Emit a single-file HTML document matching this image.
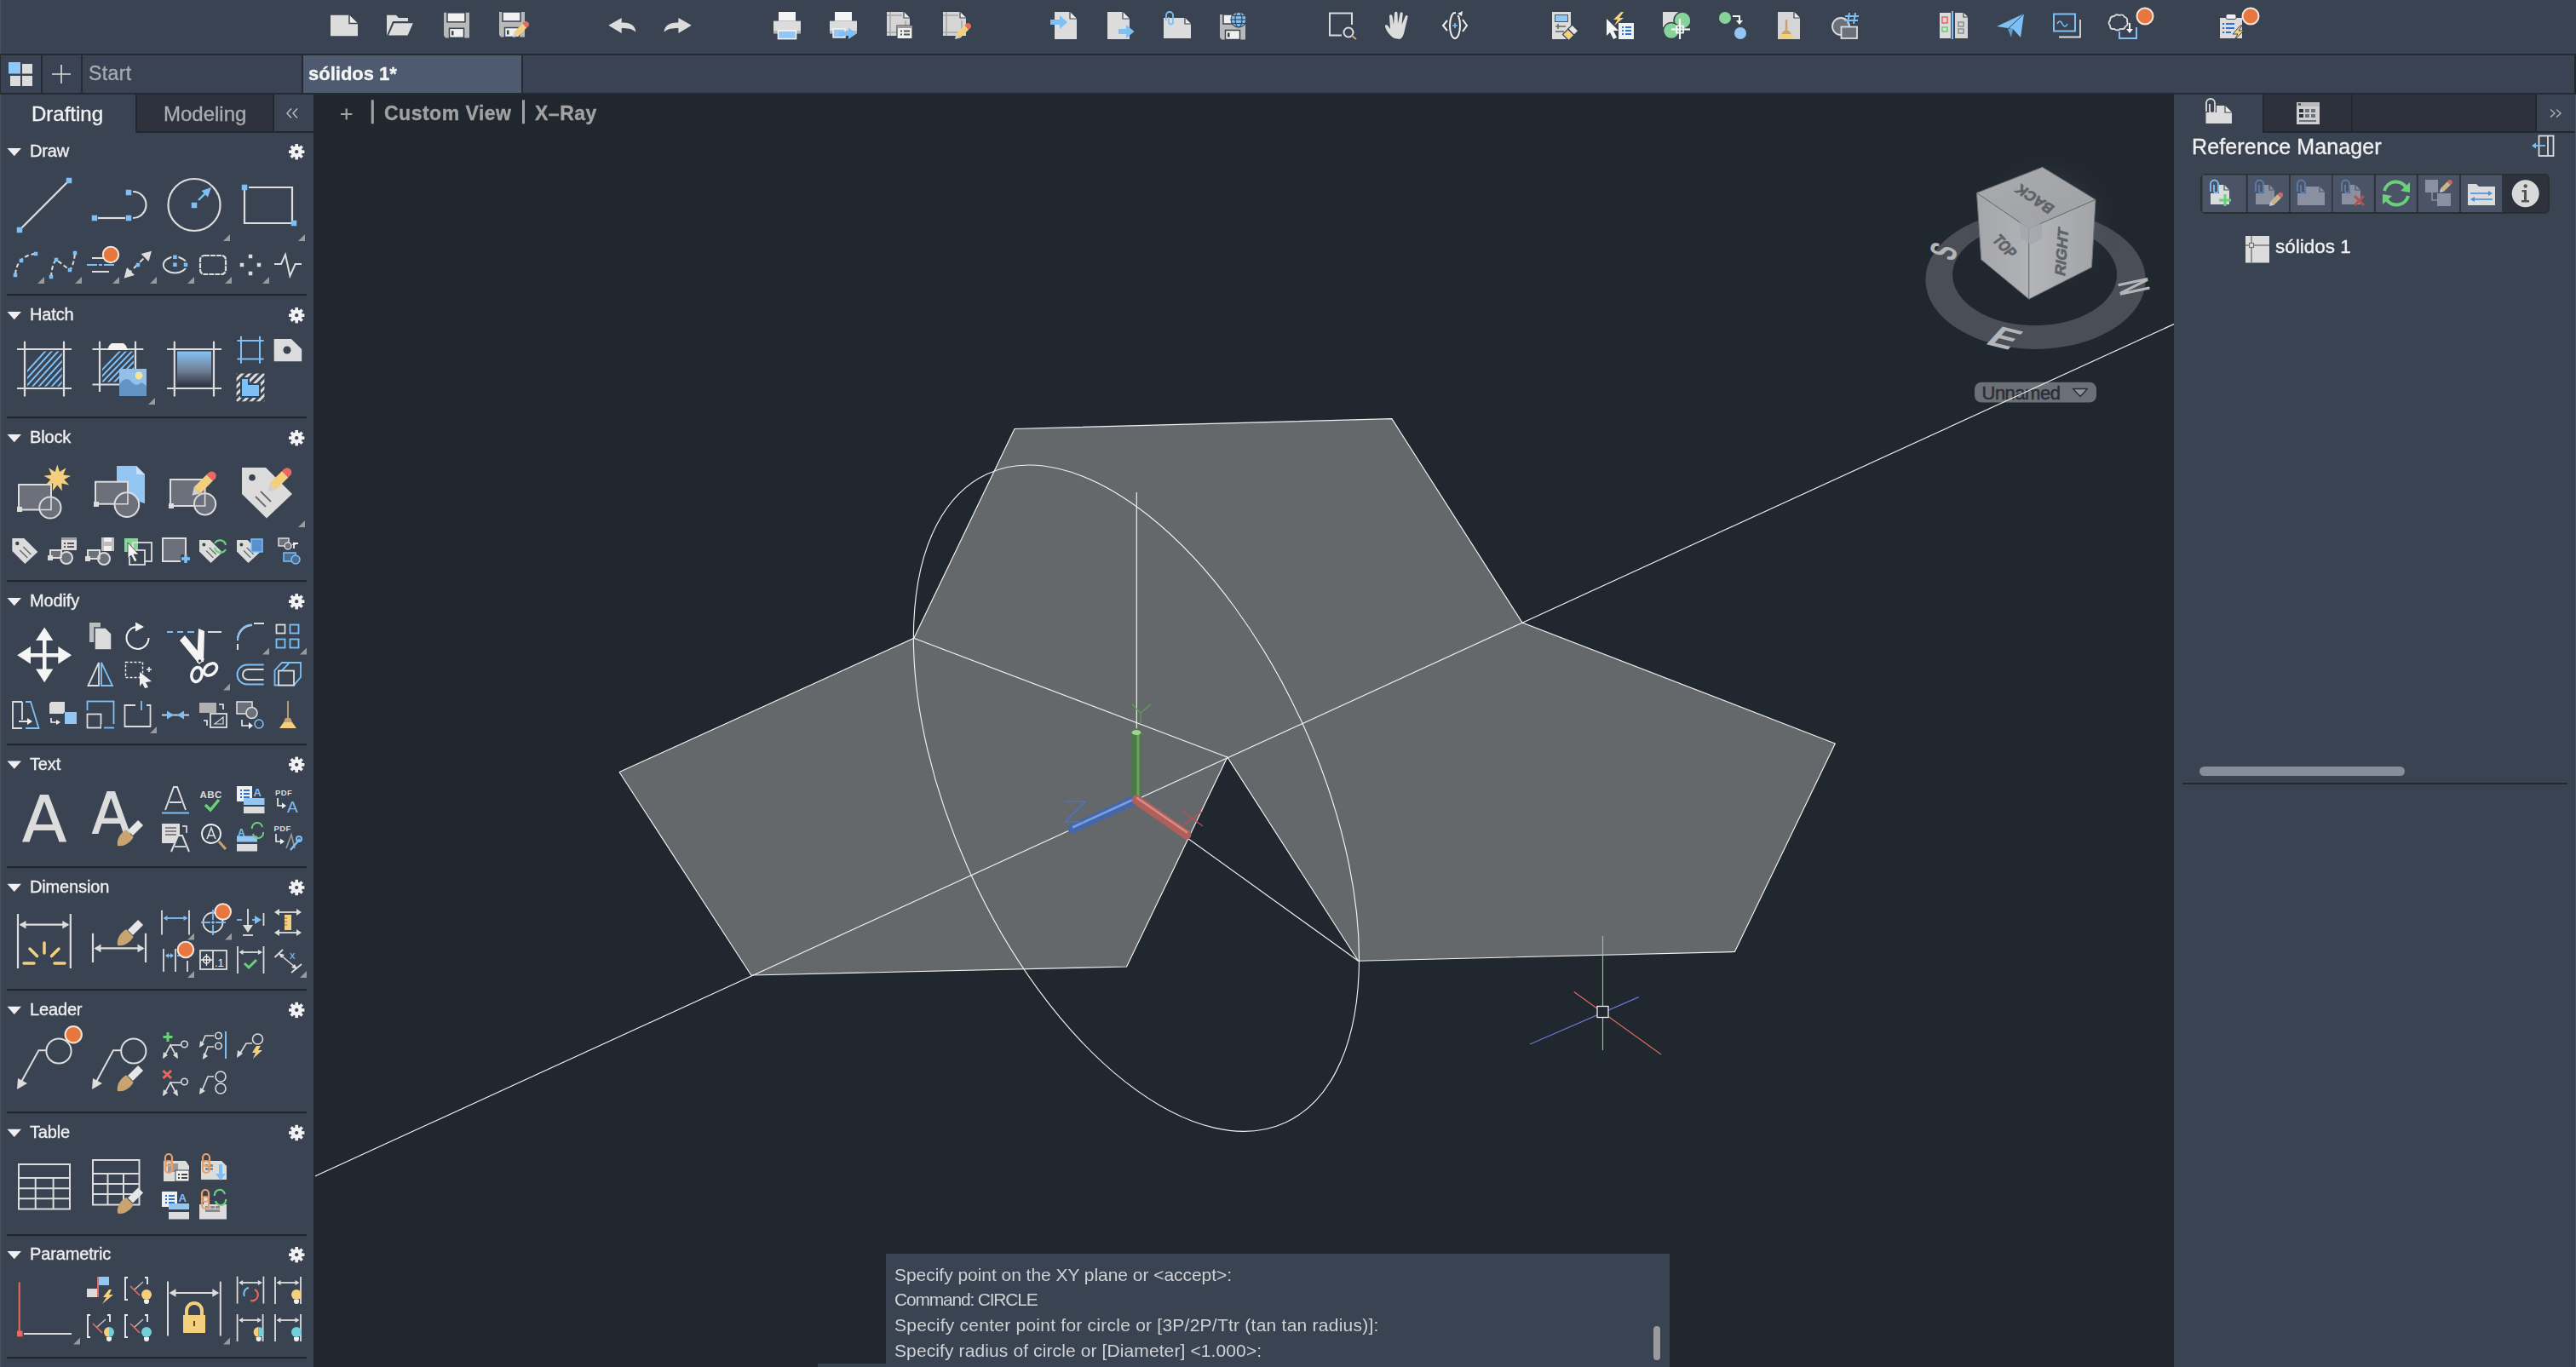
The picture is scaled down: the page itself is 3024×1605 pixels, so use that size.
<!DOCTYPE html>
<html><head><meta charset="utf-8">
<style>
*{margin:0;padding:0;box-sizing:border-box}
html,body{width:3024px;height:1605px;overflow:hidden;background:#21272e;font-family:"Liberation Sans",sans-serif}
.abs{position:absolute}
.t{position:absolute;white-space:nowrap;line-height:1;font-family:"Liberation Sans",sans-serif;will-change:transform;-webkit-text-stroke:0.35px currentColor}

</style></head><body>
<div class="abs" style="left:0;top:0;width:3024px;height:64px;background:#3a4352"></div>
<div class="abs" style="left:0;top:0;width:1px;height:1605px;background:#4a5160"></div>
<div class="abs" style="left:0;top:63px;width:3024px;height:48px;background:#262a32"></div>
<div class="abs" style="left:1px;top:65px;width:47px;height:44px;background:#3a4353"></div>
<div class="abs" style="left:50px;top:65px;width:45px;height:44px;background:#3a4353"></div>
<div class="abs" style="left:97px;top:65px;width:257px;height:44px;background:#3a4353"></div>
<div class="abs" style="left:356px;top:65px;width:256px;height:44px;background:#4e5a70"></div>
<div class="abs" style="left:614px;top:65px;width:2408px;height:44px;background:#3a4353"></div>
<div class="abs" style="left:3022px;top:63px;width:2px;height:48px;background:#22262d"></div>
<div class="abs" style="left:1px;top:111px;width:367px;height:1494px;background:#3a4352"></div>
<div class="abs" style="left:159px;top:111px;width:163px;height:45px;background:#2e323d;border-left:2px solid #23272e;border-right:2px solid #23272e;border-bottom:2px solid #23272e"></div>
<div class="abs" style="left:322px;top:111px;width:46px;height:45px;background:#3a4352;border-bottom:2px solid #23272e"></div>
<div class="abs" style="left:368px;top:111px;width:2px;height:1494px;background:#23282f"></div>
<div class="abs" style="left:2552px;top:111px;width:472px;height:1494px;background:#3a4352"></div>
<div class="abs" style="left:2656px;top:111px;width:320px;height:45px;background:#2d313c;border-left:2px solid #23272e;border-bottom:2px solid #23272e"></div>
<div class="abs" style="left:2760px;top:111px;width:2px;height:45px;background:#23272e"></div>
<div class="abs" style="left:2976px;top:111px;width:48px;height:45px;background:#3a4352;border-left:2px solid #23272e;border-bottom:2px solid #23272e"></div>
<div class="abs" style="left:2583px;top:204px;width:410px;height:47px;background:#2d323c;border:2px solid #27302e;border-radius:6px"></div>
<div class="abs" style="left:2582px;top:900px;width:241px;height:11px;background:#878e99;border-radius:6px"></div>
<div class="abs" style="left:2562px;top:919px;width:452px;height:2px;background:#22272e"></div>
<div class="abs" style="left:960px;top:1601px;width:1000px;height:4px;background:#3a4352"></div>
<div class="abs" style="left:1040px;top:1472px;width:920px;height:133px;background:#3a4352"></div>
<div class="abs" style="left:1941px;top:1557px;width:8px;height:40px;background:#9a9a9d;border-radius:4px"></div>
<div class="abs" style="left:3023px;top:111px;width:1px;height:1494px;background:#4f5665"></div>

<svg class="abs" style="left:0;top:0" width="3024" height="1605" viewBox="0 0 3024 1605">
<defs><clipPath id="vpc"><rect x="370" y="111" width="2182" height="1494"/></clipPath>
<radialGradient id="glow" cx="0.5" cy="0.5" r="0.5"><stop offset="0" stop-color="#8a9099" stop-opacity="0.35"/><stop offset="0.6" stop-color="#5a6068" stop-opacity="0.15"/><stop offset="1" stop-color="#20252d" stop-opacity="0"/></radialGradient>
<linearGradient id="topf" x1="0" y1="0" x2="1" y2="1"><stop offset="0" stop-color="#a9abae"/><stop offset="1" stop-color="#9fa1a5"/></linearGradient>
<linearGradient id="leftf" x1="0" y1="0" x2="1" y2="0"><stop offset="0" stop-color="#a4a6a9"/><stop offset="1" stop-color="#b0b2b5"/></linearGradient>
<linearGradient id="rightf" x1="0" y1="0" x2="1" y2="0"><stop offset="0" stop-color="#b3b5b8"/><stop offset="1" stop-color="#a2a4a7"/></linearGradient>
</defs>
<g clip-path="url(#vpc)">
<!-- viewcube -->
<path fill-rule="evenodd" fill="#4a4f57" d="M2260.3,328.5 a129.2,81.4 0 1,0 258.4,0 a129.2,81.4 0 1,0 -258.4,0 Z M2292.1,322.5 a96.5,59.7 0 1,0 193,0 a96.5,59.7 0 1,0 -193,0 Z"/>
<ellipse cx="2402" cy="262" rx="92" ry="88" fill="url(#glow)" opacity="0.9"/>
<polygon points="2320.5,226.5 2397.6,196.3 2460,234.4 2381.8,268.5" fill="url(#topf)" stroke="#6e7175" stroke-width="1"/>
<polygon points="2320.5,226.5 2381.8,268.5 2381.8,351.2 2325.7,304.7" fill="url(#leftf)" stroke="#6e7175" stroke-width="1"/>
<polygon points="2381.8,268.5 2460,234.4 2455.5,313.8 2381.8,351.2" fill="url(#rightf)" stroke="#6e7175" stroke-width="1"/>
<polygon points="2370,262 2384,256 2397,264 2397,280 2384,287 2372,280" fill="#a4a8ae" opacity="0.8"/>
<g fill="#5f6369" stroke="#5f6369" stroke-width="0.7" font-family="Liberation Sans" font-weight="bold">
<text x="0" y="0" font-size="17" transform="translate(2413,243) rotate(-146) skewX(-10)">BACK</text>
<text x="0" y="0" font-size="17" transform="translate(2338,282) rotate(55) skewY(-8) scale(0.85,1.1)">TOP</text>
<text x="0" y="0" font-size="18" transform="translate(2424,325) rotate(-86) skewX(-12) scale(1,0.95)">RIGHT</text>
</g>
<g fill="#b3b5b8" font-family="Liberation Sans" font-weight="bold">
<text x="0" y="0" font-size="36" transform="translate(2293,308) rotate(-68) scale(0.65,1.25)">S</text>
<text x="0" y="0" font-size="38" transform="translate(2524,341) rotate(-102) scale(0.62,1.35)">N</text>
<text x="0" y="0" font-size="40" transform="translate(2329,403.5) rotate(14) skewX(-28) scale(1.15,0.9)">E</text>
</g>
<rect x="2318" y="448.8" width="143" height="23.8" rx="8" fill="#6b7077"/>
<text x="2326.5" y="468.8" font-family="Liberation Sans" font-size="22" fill="#2a2e35" stroke="#2a2e35" stroke-width="0.5" letter-spacing="-0.5">Unnamed</text>
<polygon points="2433.5,456.5 2450.5,456.5 2442,465.5" fill="#8c979d" stroke="#2a2e35" stroke-width="1.4" stroke-linejoin="round"/>

<polygon fill="#65686b" points="727,906.5 1072.8,749.3 1191,503.5 1633.9,491.7 1787,731 2154.3,873 2036.4,1117.5 1594.5,1128.2 1440.8,889 1322.6,1135 881.8,1145"/>
<g stroke="#f2f2f2" stroke-width="1.15" fill="none">
<polyline points="727,906.5 1072.8,749.3 1191,503.5 1633.9,491.7 1787,731 2154.3,873 2036.4,1117.5 1594.5,1128.2 1440.8,889 1322.6,1135 881.8,1145 727,906.5"/>
<line x1="368" y1="1381.7" x2="2552" y2="380.5"/>
<line x1="1072.8" y1="749.3" x2="1440.8" y2="889"/>
<line x1="1331" y1="938.7" x2="1594.5" y2="1128.2"/>
<line x1="1334.3" y1="578" x2="1334.3" y2="858"/>
<ellipse cx="1333.94" cy="937.2" rx="213.87" ry="419.1" transform="rotate(-24.69 1333.94 937.2)"/>
</g>
<!-- UCS icon -->
<g stroke-linecap="round">
<line x1="1334" y1="861" x2="1334" y2="936" stroke="#4a7a44" stroke-width="11.5"/>
<line x1="1336" y1="862" x2="1336" y2="934" stroke="#6fa062" stroke-width="3"/>
<line x1="1332" y1="939" x2="1259" y2="973" stroke="#4466aa" stroke-width="11"/>
<line x1="1332" y1="938" x2="1260" y2="971" stroke="#7ca0dc" stroke-width="2.5"/>
<line x1="1334" y1="939" x2="1393" y2="980" stroke="#b0605c" stroke-width="11"/>
<line x1="1335" y1="937" x2="1393" y2="977" stroke="#d98b86" stroke-width="2.5"/>
</g>
<ellipse cx="1334" cy="860" rx="5.5" ry="3" fill="#9fd394"/>
<g stroke-width="1.1" fill="none">
<polyline points="1329,827 1339,837 1351,827" stroke="#59a64e"/><line x1="1339" y1="837" x2="1339" y2="850" stroke="#59a64e"/>
<polyline points="1250,941 1274,941 1250,965 1272,965" stroke="#4b79d0"/>
<line x1="1388" y1="952" x2="1412" y2="970" stroke="#c34f4a"/><line x1="1412" y1="952" x2="1388" y2="970" stroke="#c34f4a"/>
</g>
<!-- crosshair -->
<g stroke-width="1.2">
<line x1="1881.5" y1="1099" x2="1881.5" y2="1233" stroke="#7fd16f"/>
<line x1="1847.7" y1="1164.6" x2="1950" y2="1238" stroke="#d86b61"/>
<line x1="1796" y1="1226" x2="1923.8" y2="1170.6" stroke="#7474d8"/>
<rect x="1875" y="1181.5" width="13" height="13" fill="#21272e" stroke="#f0f0f0" stroke-width="1.3"/>
</g>
</g>

<path d="M388,17.7 L410,17.7 L420,27.5 L420,42.2 L388,42.2 Z" fill="#dcdcdc"/><path d="M410,17.7 L410,27.5 L420,27.5" fill="#ececec" stroke="#3a4352" stroke-width="1.5"/>
<path d="M454,17.7 L465,17.7 L468,21 L479,21 L479,25 L461,25 L454,42 Z" fill="#dcdcdc"/><polygon points="462,26.5 486,26.5 479,42.2 455,42.2" fill="#dcdcdc" stroke="#3a4352" stroke-width="1.5"/>
<g transform="translate(521,14.8)"><path d="M0,0 L30,0 L30,29.6 L2,29.6 L0,27 Z" fill="#b9b9b9"/><rect x="4" y="0" width="21" height="11" fill="#f0f0f0" stroke="#3a4352" stroke-width="1.5"/><rect x="6.5" y="18.5" width="17" height="11" fill="#f0f0f0" stroke="#3a4352" stroke-width="1.5"/><rect x="9" y="21.5" width="2.5" height="5" fill="#3a4352"/></g>
<g transform="translate(586,14)"><path d="M0,0 L30,0 L30,29.6 L2,29.6 L0,27 Z" fill="#b9b9b9"/><rect x="4" y="0" width="21" height="11" fill="#f0f0f0" stroke="#3a4352" stroke-width="1.5"/><rect x="6.5" y="18.5" width="17" height="11" fill="#f0f0f0" stroke="#3a4352" stroke-width="1.5"/><rect x="9" y="21.5" width="2.5" height="5" fill="#3a4352"/></g><g transform="translate(602,44) scale(0.7)"><g transform="rotate(-45)"><polygon points="0,0 8,-5 8,5" fill="#d0d0d0"/><rect x="8" y="-5" width="20" height="10" fill="#f4d07e"/><path d="M28,-5 h3 a5,5 0 0 1 0,10 h-3 z" fill="#ea6a62"/></g></g>
<path d="M714.3,29.8 L729.7,21 L729.7,26.5 C740,26 746,30 746.3,37.7 C742,33.5 736,33 729.7,33 L729.7,39 Z" fill="#dcdcdc"/>
<path d="M811.8,29.8 L796.4,21 L796.4,26.5 C786,26 780,30 779.5,37.7 C784,33.5 790,33 796.4,33 L796.4,39 Z" fill="#dcdcdc"/>
<rect x="914" y="14" width="20" height="10.6" fill="#f5f5f5"/><rect x="908" y="24.6" width="32" height="14.8" fill="#dcdcdc"/><rect x="908" y="36" width="32" height="3" fill="#b5b5b5"/><rect x="913.5" y="36" width="21" height="9.6" fill="#94c6f3" stroke="#f5f5f5" stroke-width="1.6"/>
<rect x="980" y="14" width="20" height="10.6" fill="#f5f5f5"/><rect x="974" y="24.6" width="32" height="14.8" fill="#dcdcdc"/><rect x="974" y="36" width="32" height="3" fill="#b5b5b5"/><rect x="978" y="34" width="14" height="10" fill="#94c6f3" stroke="#f5f5f5" stroke-width="1.4"/><rect x="985" y="37" width="12" height="5" fill="#7ec0f5"/><polygon points="996,32.5 1005.7,39.5 996,46" fill="#7ec0f5"/>
<path d="M1041,14 L1061,14 L1068,21 L1068,42 L1041,42 Z" fill="#d5d5d5"/><path d="M1061,14 L1061,21 L1068,21" fill="#ededed" stroke="#3a4352" stroke-width="1.2"/><g stroke="#a8a8a8" stroke-width="1.6"><line x1="1045" y1="14" x2="1045" y2="42"/><line x1="1041" y1="38" x2="1068" y2="38"/><line x1="1063" y1="24" x2="1063" y2="42"/><line x1="1041" y1="18" x2="1059" y2="18"/></g><rect x="1053" y="30" width="18" height="15.6" fill="#f0f0f0" stroke="#3a4352" stroke-width="1.2"/><rect x="1053" y="30" width="18" height="3" fill="#9a9a9a"/><g fill="#555"><rect x="1057" y="35.5" width="2" height="2"/><rect x="1061" y="35.5" width="7" height="2"/><rect x="1057" y="39.5" width="2" height="2"/><rect x="1061" y="39.5" width="7" height="2"/></g>
<path d="M1107,14 L1127,14 L1134,21 L1134,42 L1107,42 Z" fill="#d5d5d5"/><path d="M1127,14 L1127,21 L1134,21" fill="#ededed" stroke="#3a4352" stroke-width="1.2"/><g stroke="#a8a8a8" stroke-width="1.6"><line x1="1111" y1="14" x2="1111" y2="42"/><line x1="1107" y1="38" x2="1134" y2="38"/><line x1="1129" y1="24" x2="1129" y2="42"/><line x1="1107" y1="18" x2="1125" y2="18"/></g><g transform="translate(1121,46) scale(0.7)"><g transform="rotate(-45)"><polygon points="0,0 8,-5 8,5" fill="#d0d0d0"/><rect x="8" y="-5" width="20" height="10" fill="#f4d07e"/><path d="M28,-5 h3 a5,5 0 0 1 0,10 h-3 z" fill="#ea6a62"/></g></g>
<path d="M1238,14 L1256,14 L1264,22 L1264,46 L1238,46 Z" fill="#dcdcdc"/><path d="M1256,14 L1256,22 L1264,22" fill="#ededed" stroke="#3a4352" stroke-width="1.2"/><rect x="1233" y="23" width="13" height="6" fill="#7ec0f5"/><polygon points="1244,18 1253,26 1244,34" fill="#7ec0f5" stroke="#3a4352" stroke-width="0"/>
<path d="M1300,14 L1318,14 L1326,22 L1326,46 L1300,46 Z" fill="#dcdcdc"/><path d="M1318,14 L1318,22 L1326,22" fill="#ededed" stroke="#3a4352" stroke-width="1.2"/><rect x="1313" y="34" width="10" height="6" fill="#7ec0f5" stroke="#3a4352" stroke-width="0"/><polygon points="1322,29 1331.5,37 1322,45" fill="#7ec0f5"/>
<path d="M1366,21 L1391,21 L1398,28 L1398,45 L1366,45 Z" fill="#dcdcdc"/><path d="M1391,21 L1391,28 L1398,28" fill="#ededed" stroke="#3a4352" stroke-width="1.2"/><path d="M1369,24 v-6 a4,4 0 0 1 8,0 v8 a2.5,2.5 0 0 1 -5,0 v-6" fill="none" stroke="#7ec0f5" stroke-width="1.8"/>
<g transform="translate(1432,17)"><path d="M0,0 L30,0 L30,29.6 L2,29.6 L0,27 Z" fill="#b9b9b9"/><rect x="4" y="0" width="21" height="11" fill="#f0f0f0" stroke="#3a4352" stroke-width="1.5"/><rect x="6.5" y="18.5" width="17" height="11" fill="#f0f0f0" stroke="#3a4352" stroke-width="1.5"/><rect x="9" y="21.5" width="2.5" height="5" fill="#3a4352"/></g><circle cx="1454" cy="23" r="9" fill="#7ec0f5" stroke="#3a4352" stroke-width="1.2"/><g stroke="#3a4352" stroke-width="1.2" fill="none"><ellipse cx="1454" cy="23" rx="4" ry="9"/><line x1="1445" y1="23" x2="1463" y2="23"/><line x1="1447" y1="18.5" x2="1461" y2="18.5"/><line x1="1447" y1="27.5" x2="1461" y2="27.5"/></g>
<rect x="1561" y="15.5" width="26" height="26" fill="none" stroke="#dcdcdc" stroke-width="2"/><rect x="1575" y="29" width="20" height="20" fill="#3a4352"/><circle cx="1583" cy="38" r="5.5" fill="none" stroke="#dcdcdc" stroke-width="2"/><line x1="1587" y1="42" x2="1592" y2="46" stroke="#c9a36f" stroke-width="2.2"/>
<path d="M1637,45 C1631,42 1627,35 1626,31 C1625.5,29 1628,28.5 1629.5,30.5 L1632,34 L1631,19 C1631,16.5 1634,16.5 1634.5,19 L1636,29 L1637,15.5 C1637.5,13 1640.5,13 1640.5,15.5 L1641,28 L1643.5,16 C1644,13.5 1647,14 1646.7,16.5 L1645.5,29 L1649.5,19.5 C1650.5,17 1653.5,18 1652.5,20.5 L1649,35 C1648,41 1646,45 1643,46 Z" fill="#dcdcdc"/>
<ellipse cx="1708" cy="30" rx="6" ry="15" fill="none" stroke="#f0f0f0" stroke-width="2"/><path d="M1699,24 L1694,30 L1699,36" fill="none" stroke="#f0f0f0" stroke-width="2"/><path d="M1717,23 L1722,30 L1717,37" fill="none" stroke="#f0f0f0" stroke-width="2"/><path d="M1705,30 h6 M1708,27 v6" stroke="#7ec0f5" stroke-width="1.6"/><rect x="1709" y="12" width="8" height="6" fill="#3a4352"/><polygon points="1711,16 1717,13 1716,19" fill="#f0f0f0"/>
<rect x="1822" y="14" width="22" height="32" fill="#dcdcdc"/><rect x="1825.5" y="17.5" width="15" height="8" fill="#94c6f3" stroke="#555" stroke-width="1"/><g stroke="#6a6a6a" stroke-width="1.6"><line x1="1826" y1="31" x2="1838" y2="31"/><line x1="1826" y1="37" x2="1836" y2="37"/><line x1="1829" y1="28" x2="1829" y2="34"/></g><g transform="translate(1838,44) rotate(-45)"><rect x="0" y="-5" width="9" height="10" fill="#f4d07e" stroke="#3a4352" stroke-width="1.2"/><rect x="9" y="-5" width="7" height="10" fill="#e6e6e6" stroke="#3a4352" stroke-width="1.2"/></g>
<polygon points="1886,22 1886,42 1890,38 1894,46 1898,44 1894,36 1900,36" fill="#f5f5f5"/><rect x="1900" y="27" width="18" height="19" fill="#f0f0f0"/><g fill="#2f6fd6"><rect x="1904" y="31" width="2" height="2"/><rect x="1908" y="31" width="7" height="2"/><rect x="1904" y="35" width="2" height="2"/><rect x="1908" y="35" width="7" height="2"/><rect x="1904" y="39" width="2" height="2"/><rect x="1908" y="39" width="7" height="2"/></g><polygon points="1903,14 1894,23 1899,23 1895,30 1906,21 1901,21 1906,14" fill="#f4d07e"/>
<rect x="1952" y="14" width="18" height="18" fill="#dcdcdc"/><circle cx="1975" cy="24" r="10" fill="#86d49a" stroke="#3a4352" stroke-width="1.5"/><circle cx="1962" cy="36" r="9.5" fill="#86d49a" stroke="#3a4352" stroke-width="1.5"/><rect x="1963" y="25" width="18" height="18" fill="#3a4352" opacity="0"/><g stroke="#f5f5f5" stroke-width="2.2"><line x1="1972" y1="22" x2="1972" y2="46"/><line x1="1962" y1="34.5" x2="1984" y2="34.5"/></g><rect x="1968" y="30.5" width="8" height="8" fill="none" stroke="#f5f5f5" stroke-width="1.8"/>
<circle cx="2025" cy="21" r="7" fill="#86d49a"/><circle cx="2043" cy="39" r="7" fill="#94c6f3"/><path d="M2034,19 h8 v6" fill="none" stroke="#f5f5f5" stroke-width="2"/><polygon points="2038,24 2046,24 2042,29" fill="#f5f5f5"/>
<path d="M2087,14 L2106,14 L2113,21 L2113,46 L2087,46 Z" fill="#d5d5d5"/><path d="M2106,14 L2106,21 L2113,21" fill="#ededed" stroke="#3a4352" stroke-width="1.2"/><line x1="2097" y1="23" x2="2097" y2="36" stroke="#c9a36f" stroke-width="2.5"/><polygon points="2094,36 2100,36 2103,40 2091,40" fill="#c9a36f"/><polygon points="2091,40 2103,40 2106,46 2088,46" fill="#f4d07e"/>
<circle cx="2161" cy="31" r="10" fill="#6b707a" stroke="#dcdcdc" stroke-width="1.8"/><rect x="2161.5" y="31.5" width="18.5" height="13.5" fill="#6b707a" stroke="#dcdcdc" stroke-width="1.8"/><g stroke="#7ec0f5" stroke-width="2"><line x1="2171" y1="15" x2="2169" y2="28"/><line x1="2178" y1="15" x2="2176" y2="28"/><line x1="2166" y1="19" x2="2182" y2="19"/><line x1="2165" y1="24" x2="2181" y2="24"/></g>
<rect x="2277" y="15" width="13" height="30" fill="#dcdcdc"/><rect x="2280" y="20" width="6" height="7" fill="none" stroke="#ea6a62" stroke-width="1.6"/><rect x="2280" y="32" width="6" height="5" fill="none" stroke="#6ccf7c" stroke-width="1.6"/><line x1="2292" y1="13" x2="2292" y2="46" stroke="#7ec0f5" stroke-width="2"/><path d="M2295,15 L2305,15 L2310,20 L2310,45 L2295,45 Z" fill="#d5d5d5"/><path d="M2305,15 L2305,20 L2310,20" fill="#ededed" stroke="#3a4352" stroke-width="1.2"/><rect x="2299" y="26" width="6" height="5" fill="none" stroke="#888" stroke-width="1.4"/><rect x="2299" y="34" width="6" height="5" fill="none" stroke="#888" stroke-width="1.4"/>
<polygon points="2344,31 2376,16 2372,44 2363,34" fill="#7ec0f5"/><polygon points="2357,34 2363,34 2361,44" fill="#5c9fd6"/><line x1="2357" y1="34" x2="2376" y2="16" stroke="#3a4352" stroke-width="1"/>
<rect x="2411" y="16.5" width="25" height="20" fill="none" stroke="#7ec0f5" stroke-width="2"/><path d="M2415,28 q3,-6 6,0 q3,6 6,0" fill="none" stroke="#7ec0f5" stroke-width="1.6"/><polyline points="2417,43.5 2442,43.5 2442,23" fill="none" stroke="#dcdcdc" stroke-width="1.8"/>
<path d="M2477,24 q0,-5 5,-5 q2,-3 6,-1 q4,-2 6,2 q4,1 3,5 q2,4 -2,6 q-1,4 -6,3 q-3,3 -7,0 q-5,1 -5,-4 q-3,-3 0,-6 z" fill="none" stroke="#dcdcdc" stroke-width="1.8"/><polyline points="2488,37 2488,45 2508,45 2508,32" fill="none" stroke="#7ec0f5" stroke-width="2"/><path d="M2500,27 v10" stroke="#f0f0f0" stroke-width="2"/><polygon points="2496,34 2504,34 2500,39" fill="#f0f0f0"/><circle cx="2518" cy="19" r="9.5" fill="#e5773f" stroke="#f5e6dc" stroke-width="2"/>
<rect x="2606" y="21" width="26" height="24" fill="#dcdcdc"/><rect x="2613" y="16.5" width="12" height="6" rx="2" fill="#f0f0f0" stroke="#3a4352" stroke-width="1"/><g fill="#2f6fd6"><rect x="2609" y="27" width="2.2" height="2"/><rect x="2613" y="27" width="10" height="2"/><rect x="2609" y="32" width="2.2" height="2"/><rect x="2613" y="32" width="10" height="2"/><rect x="2609" y="37" width="2.2" height="2"/><rect x="2613" y="37" width="6" height="2"/></g><polygon points="2630,30 2621,40 2627,40 2622,48 2634,36 2628,36 2632,30" fill="#f4d07e" stroke="#3a4352" stroke-width="1"/><circle cx="2642" cy="19" r="9.5" fill="#e5773f" stroke="#f5e6dc" stroke-width="2"/>
<rect x="10" y="73" width="14" height="13.5" fill="#8ec8f6"/><rect x="26" y="75" width="12" height="11.5" fill="#dcdcdc"/><rect x="12" y="89" width="12" height="12" fill="#dcdcdc"/><rect x="26" y="89" width="12" height="12" fill="#dcdcdc"/>
<path d="M72,76 v22 M61,87 h22" stroke="#dcdcdc" stroke-width="1.6"/>
<path d="M406.7,127.4 v13.2 M400,134 h13.4" stroke="#a2a2a2" stroke-width="2.2"/><rect x="435.8" y="117.3" width="3" height="28" fill="#a2a2a2"/><rect x="613" y="117.3" width="3" height="28" fill="#a2a2a2"/><polygon points="8.5,174 25.0,174 16.75,183.2" fill="#f0f0f0"/>
<g transform="translate(348.2,178.2)"><rect x="-1.8" y="-9.2" width="3.6" height="5" transform="rotate(0)" fill="#f2f2f2"/><rect x="-1.8" y="-9.2" width="3.6" height="5" transform="rotate(45)" fill="#f2f2f2"/><rect x="-1.8" y="-9.2" width="3.6" height="5" transform="rotate(90)" fill="#f2f2f2"/><rect x="-1.8" y="-9.2" width="3.6" height="5" transform="rotate(135)" fill="#f2f2f2"/><rect x="-1.8" y="-9.2" width="3.6" height="5" transform="rotate(180)" fill="#f2f2f2"/><rect x="-1.8" y="-9.2" width="3.6" height="5" transform="rotate(225)" fill="#f2f2f2"/><rect x="-1.8" y="-9.2" width="3.6" height="5" transform="rotate(270)" fill="#f2f2f2"/><rect x="-1.8" y="-9.2" width="3.6" height="5" transform="rotate(315)" fill="#f2f2f2"/><circle r="6.6" fill="#f2f2f2"/><circle r="2.1" fill="#3a4352"/></g>
<polygon points="8.5,366 25.0,366 16.75,375.2" fill="#f0f0f0"/>
<g transform="translate(348.2,370.2)"><rect x="-1.8" y="-9.2" width="3.6" height="5" transform="rotate(0)" fill="#f2f2f2"/><rect x="-1.8" y="-9.2" width="3.6" height="5" transform="rotate(45)" fill="#f2f2f2"/><rect x="-1.8" y="-9.2" width="3.6" height="5" transform="rotate(90)" fill="#f2f2f2"/><rect x="-1.8" y="-9.2" width="3.6" height="5" transform="rotate(135)" fill="#f2f2f2"/><rect x="-1.8" y="-9.2" width="3.6" height="5" transform="rotate(180)" fill="#f2f2f2"/><rect x="-1.8" y="-9.2" width="3.6" height="5" transform="rotate(225)" fill="#f2f2f2"/><rect x="-1.8" y="-9.2" width="3.6" height="5" transform="rotate(270)" fill="#f2f2f2"/><rect x="-1.8" y="-9.2" width="3.6" height="5" transform="rotate(315)" fill="#f2f2f2"/><circle r="6.6" fill="#f2f2f2"/><circle r="2.1" fill="#3a4352"/></g>
<polygon points="8.5,510 25.0,510 16.75,519.2" fill="#f0f0f0"/>
<g transform="translate(348.2,514.2)"><rect x="-1.8" y="-9.2" width="3.6" height="5" transform="rotate(0)" fill="#f2f2f2"/><rect x="-1.8" y="-9.2" width="3.6" height="5" transform="rotate(45)" fill="#f2f2f2"/><rect x="-1.8" y="-9.2" width="3.6" height="5" transform="rotate(90)" fill="#f2f2f2"/><rect x="-1.8" y="-9.2" width="3.6" height="5" transform="rotate(135)" fill="#f2f2f2"/><rect x="-1.8" y="-9.2" width="3.6" height="5" transform="rotate(180)" fill="#f2f2f2"/><rect x="-1.8" y="-9.2" width="3.6" height="5" transform="rotate(225)" fill="#f2f2f2"/><rect x="-1.8" y="-9.2" width="3.6" height="5" transform="rotate(270)" fill="#f2f2f2"/><rect x="-1.8" y="-9.2" width="3.6" height="5" transform="rotate(315)" fill="#f2f2f2"/><circle r="6.6" fill="#f2f2f2"/><circle r="2.1" fill="#3a4352"/></g>
<polygon points="8.5,702 25.0,702 16.75,711.2" fill="#f0f0f0"/>
<g transform="translate(348.2,706.2)"><rect x="-1.8" y="-9.2" width="3.6" height="5" transform="rotate(0)" fill="#f2f2f2"/><rect x="-1.8" y="-9.2" width="3.6" height="5" transform="rotate(45)" fill="#f2f2f2"/><rect x="-1.8" y="-9.2" width="3.6" height="5" transform="rotate(90)" fill="#f2f2f2"/><rect x="-1.8" y="-9.2" width="3.6" height="5" transform="rotate(135)" fill="#f2f2f2"/><rect x="-1.8" y="-9.2" width="3.6" height="5" transform="rotate(180)" fill="#f2f2f2"/><rect x="-1.8" y="-9.2" width="3.6" height="5" transform="rotate(225)" fill="#f2f2f2"/><rect x="-1.8" y="-9.2" width="3.6" height="5" transform="rotate(270)" fill="#f2f2f2"/><rect x="-1.8" y="-9.2" width="3.6" height="5" transform="rotate(315)" fill="#f2f2f2"/><circle r="6.6" fill="#f2f2f2"/><circle r="2.1" fill="#3a4352"/></g>
<polygon points="8.5,893.6 25.0,893.6 16.75,902.8000000000001" fill="#f0f0f0"/>
<g transform="translate(348.2,897.8000000000001)"><rect x="-1.8" y="-9.2" width="3.6" height="5" transform="rotate(0)" fill="#f2f2f2"/><rect x="-1.8" y="-9.2" width="3.6" height="5" transform="rotate(45)" fill="#f2f2f2"/><rect x="-1.8" y="-9.2" width="3.6" height="5" transform="rotate(90)" fill="#f2f2f2"/><rect x="-1.8" y="-9.2" width="3.6" height="5" transform="rotate(135)" fill="#f2f2f2"/><rect x="-1.8" y="-9.2" width="3.6" height="5" transform="rotate(180)" fill="#f2f2f2"/><rect x="-1.8" y="-9.2" width="3.6" height="5" transform="rotate(225)" fill="#f2f2f2"/><rect x="-1.8" y="-9.2" width="3.6" height="5" transform="rotate(270)" fill="#f2f2f2"/><rect x="-1.8" y="-9.2" width="3.6" height="5" transform="rotate(315)" fill="#f2f2f2"/><circle r="6.6" fill="#f2f2f2"/><circle r="2.1" fill="#3a4352"/></g>
<polygon points="8.5,1037.8 25.0,1037.8 16.75,1047.0" fill="#f0f0f0"/>
<g transform="translate(348.2,1042.0)"><rect x="-1.8" y="-9.2" width="3.6" height="5" transform="rotate(0)" fill="#f2f2f2"/><rect x="-1.8" y="-9.2" width="3.6" height="5" transform="rotate(45)" fill="#f2f2f2"/><rect x="-1.8" y="-9.2" width="3.6" height="5" transform="rotate(90)" fill="#f2f2f2"/><rect x="-1.8" y="-9.2" width="3.6" height="5" transform="rotate(135)" fill="#f2f2f2"/><rect x="-1.8" y="-9.2" width="3.6" height="5" transform="rotate(180)" fill="#f2f2f2"/><rect x="-1.8" y="-9.2" width="3.6" height="5" transform="rotate(225)" fill="#f2f2f2"/><rect x="-1.8" y="-9.2" width="3.6" height="5" transform="rotate(270)" fill="#f2f2f2"/><rect x="-1.8" y="-9.2" width="3.6" height="5" transform="rotate(315)" fill="#f2f2f2"/><circle r="6.6" fill="#f2f2f2"/><circle r="2.1" fill="#3a4352"/></g>
<polygon points="8.5,1181.7 25.0,1181.7 16.75,1190.9" fill="#f0f0f0"/>
<g transform="translate(348.2,1185.9)"><rect x="-1.8" y="-9.2" width="3.6" height="5" transform="rotate(0)" fill="#f2f2f2"/><rect x="-1.8" y="-9.2" width="3.6" height="5" transform="rotate(45)" fill="#f2f2f2"/><rect x="-1.8" y="-9.2" width="3.6" height="5" transform="rotate(90)" fill="#f2f2f2"/><rect x="-1.8" y="-9.2" width="3.6" height="5" transform="rotate(135)" fill="#f2f2f2"/><rect x="-1.8" y="-9.2" width="3.6" height="5" transform="rotate(180)" fill="#f2f2f2"/><rect x="-1.8" y="-9.2" width="3.6" height="5" transform="rotate(225)" fill="#f2f2f2"/><rect x="-1.8" y="-9.2" width="3.6" height="5" transform="rotate(270)" fill="#f2f2f2"/><rect x="-1.8" y="-9.2" width="3.6" height="5" transform="rotate(315)" fill="#f2f2f2"/><circle r="6.6" fill="#f2f2f2"/><circle r="2.1" fill="#3a4352"/></g>
<polygon points="8.5,1325.8 25.0,1325.8 16.75,1335.0" fill="#f0f0f0"/>
<g transform="translate(348.2,1330.0)"><rect x="-1.8" y="-9.2" width="3.6" height="5" transform="rotate(0)" fill="#f2f2f2"/><rect x="-1.8" y="-9.2" width="3.6" height="5" transform="rotate(45)" fill="#f2f2f2"/><rect x="-1.8" y="-9.2" width="3.6" height="5" transform="rotate(90)" fill="#f2f2f2"/><rect x="-1.8" y="-9.2" width="3.6" height="5" transform="rotate(135)" fill="#f2f2f2"/><rect x="-1.8" y="-9.2" width="3.6" height="5" transform="rotate(180)" fill="#f2f2f2"/><rect x="-1.8" y="-9.2" width="3.6" height="5" transform="rotate(225)" fill="#f2f2f2"/><rect x="-1.8" y="-9.2" width="3.6" height="5" transform="rotate(270)" fill="#f2f2f2"/><rect x="-1.8" y="-9.2" width="3.6" height="5" transform="rotate(315)" fill="#f2f2f2"/><circle r="6.6" fill="#f2f2f2"/><circle r="2.1" fill="#3a4352"/></g>
<polygon points="8.5,1469 25.0,1469 16.75,1478.2" fill="#f0f0f0"/>
<g transform="translate(348.2,1473.2)"><rect x="-1.8" y="-9.2" width="3.6" height="5" transform="rotate(0)" fill="#f2f2f2"/><rect x="-1.8" y="-9.2" width="3.6" height="5" transform="rotate(45)" fill="#f2f2f2"/><rect x="-1.8" y="-9.2" width="3.6" height="5" transform="rotate(90)" fill="#f2f2f2"/><rect x="-1.8" y="-9.2" width="3.6" height="5" transform="rotate(135)" fill="#f2f2f2"/><rect x="-1.8" y="-9.2" width="3.6" height="5" transform="rotate(180)" fill="#f2f2f2"/><rect x="-1.8" y="-9.2" width="3.6" height="5" transform="rotate(225)" fill="#f2f2f2"/><rect x="-1.8" y="-9.2" width="3.6" height="5" transform="rotate(270)" fill="#f2f2f2"/><rect x="-1.8" y="-9.2" width="3.6" height="5" transform="rotate(315)" fill="#f2f2f2"/><circle r="6.6" fill="#f2f2f2"/><circle r="2.1" fill="#3a4352"/></g>
<rect x="8" y="345" width="352" height="2.2" fill="#22262d"/>
<rect x="8" y="489" width="352" height="2.2" fill="#22262d"/>
<rect x="8" y="681" width="352" height="2.2" fill="#22262d"/>
<rect x="8" y="873" width="352" height="2.2" fill="#22262d"/>
<rect x="8" y="1017" width="352" height="2.2" fill="#22262d"/>
<rect x="8" y="1161" width="352" height="2.2" fill="#22262d"/>
<rect x="8" y="1305" width="352" height="2.2" fill="#22262d"/>
<rect x="8" y="1449" width="352" height="2.2" fill="#22262d"/>
<rect x="8" y="1593" width="352" height="2.2" fill="#22262d"/>
<polyline points="342,127.5 337,133 342,138.5" fill="none" stroke="#b5b8bd" stroke-width="1.5"/><polyline points="349,127.5 344,133 349,138.5" fill="none" stroke="#b5b8bd" stroke-width="1.5"/>
<line x1="23" y1="270" x2="80" y2="213" stroke="#dcdcdc" stroke-width="2.2"/><rect x="19.75" y="266.75" width="6.5" height="6.5" fill="#7ec0f5"/><rect x="77.75" y="208.75" width="6.5" height="6.5" fill="#7ec0f5"/>
<line x1="115" y1="256" x2="147" y2="256" stroke="#dcdcdc" stroke-width="2.2"/><path d="M156,225 A15.5,15.5 0 0 1 156,256" fill="none" stroke="#dcdcdc" stroke-width="2.2"/><rect x="107.75" y="252.75" width="6.5" height="6.5" fill="#7ec0f5"/><rect x="147.75" y="252.75" width="6.5" height="6.5" fill="#7ec0f5"/><rect x="147.75" y="222.75" width="6.5" height="6.5" fill="#7ec0f5"/>
<circle cx="228" cy="240.5" r="30.5" fill="none" stroke="#dcdcdc" stroke-width="2.2"/><line x1="233" y1="235" x2="243" y2="225" stroke="#7ec0f5" stroke-width="2.4"/><polygon points="248,220 236.5,224 244,231.5" fill="#7ec0f5"/><rect x="224.75" y="237.75" width="6.5" height="6.5" fill="#7ec0f5"/>
<polyline points="287,223 287,262 343,262 343,220 292,220" fill="none" stroke="#dcdcdc" stroke-width="2.2"/><rect x="283.75" y="216.75" width="6.5" height="6.5" fill="#7ec0f5"/><rect x="341.75" y="258.75" width="6.5" height="6.5" fill="#7ec0f5"/>
<polygon points="270,283 262,283 270,275" fill="#9a9a9a"/><polygon points="358,283 350,283 358,275" fill="#9a9a9a"/>
<path d="M18,322 Q20,300 42,298" fill="none" stroke="#dcdcdc" stroke-width="2" stroke-dasharray="5,3"/><rect x="15.75" y="320.75" width="4.5" height="4.5" fill="#7ec0f5"/><rect x="22.75" y="303.75" width="4.5" height="4.5" fill="#7ec0f5"/><rect x="39.75" y="295.75" width="4.5" height="4.5" fill="#7ec0f5"/>
<path d="M60,325 Q61,310 66,305 L82,317 Q87,310 88,297" fill="none" stroke="#dcdcdc" stroke-width="2" stroke-dasharray="5,3"/><rect x="57.75" y="322.75" width="4.5" height="4.5" fill="#7ec0f5"/><rect x="63.75" y="302.75" width="4.5" height="4.5" fill="#7ec0f5"/><rect x="79.75" y="314.75" width="4.5" height="4.5" fill="#7ec0f5"/><rect x="85.75" y="294.75" width="4.5" height="4.5" fill="#7ec0f5"/>
<line x1="108" y1="303" x2="121" y2="303" stroke="#dcdcdc" stroke-width="2"/><line x1="102" y1="311" x2="114" y2="311" stroke="#7ec0f5" stroke-width="2"/><line x1="116" y1="311" x2="120" y2="311" stroke="#7ec0f5" stroke-width="2"/><line x1="122" y1="311" x2="134" y2="311" stroke="#7ec0f5" stroke-width="2"/><line x1="108" y1="319" x2="128" y2="319" stroke="#dcdcdc" stroke-width="2"/><circle cx="130" cy="299" r="9.2" fill="#e5773f" stroke="#f5e6dc" stroke-width="2"/>
<line x1="150" y1="322" x2="174" y2="298" stroke="#dcdcdc" stroke-width="2" stroke-dasharray="6,4"/><polygon points="145.6,326.8 149,314 158,323" fill="#dcdcdc"/><polygon points="178,294.7 174.5,307 165.5,298" fill="#dcdcdc"/><rect x="159.75" y="308.75" width="4.5" height="4.5" fill="#7ec0f5"/>
<ellipse cx="205.4" cy="311" rx="13.6" ry="9.4" fill="none" stroke="#dcdcdc" stroke-width="2"/><rect x="201.4" y="297.8" width="8" height="8" fill="#3a4352"/><rect x="214" y="306.8" width="8" height="8" fill="#3a4352"/><rect x="203.15" y="308.55" width="4.5" height="4.5" fill="#7ec0f5"/><rect x="203.15" y="299.55" width="4.5" height="4.5" fill="#7ec0f5"/><rect x="215.75" y="308.55" width="4.5" height="4.5" fill="#7ec0f5"/>
<rect x="235" y="300" width="30" height="22" rx="5" fill="none" stroke="#dcdcdc" stroke-width="2.2" stroke-dasharray="6,1"/>
<rect x="291.75" y="298.75" width="4.5" height="4.5" fill="#dcdcdc"/><rect x="281.75" y="308.75" width="4.5" height="4.5" fill="#dcdcdc"/><rect x="301.75" y="308.75" width="4.5" height="4.5" fill="#dcdcdc"/><rect x="291.75" y="318.75" width="4.5" height="4.5" fill="#dcdcdc"/>
<polyline points="322,310 330,310 335,299 340.4,324 346.7,310 354,310" fill="none" stroke="#dcdcdc" stroke-width="2"/>
<polygon points="52,333 44,333 52,325" fill="#9a9a9a"/>
<polygon points="96,333 88,333 96,325" fill="#9a9a9a"/>
<polygon points="140,333 132,333 140,325" fill="#9a9a9a"/>
<polygon points="184,333 176,333 184,325" fill="#9a9a9a"/>
<polygon points="228,333 220,333 228,325" fill="#9a9a9a"/>
<polygon points="272,333 264,333 272,325" fill="#9a9a9a"/>
<polygon points="316,333 308,333 316,325" fill="#9a9a9a"/>
<defs><clipPath id="hc1"><rect x="32" y="412.5" width="40.7" height="41.2"/></clipPath><clipPath id="hc2"><rect x="120" y="412.5" width="37" height="36"/></clipPath><linearGradient id="gradh" x1="0" y1="0" x2="0" y2="1"><stop offset="0" stop-color="#84c3f7"/><stop offset="0.55" stop-color="#6f7f94"/><stop offset="1" stop-color="#2c3240"/></linearGradient></defs>
<line x1="20" y1="410" x2="84" y2="410" stroke="#dcdcdc" stroke-width="2.2"/><line x1="20" y1="456" x2="84" y2="456" stroke="#dcdcdc" stroke-width="2.2"/><line x1="29" y1="400.7" x2="29" y2="465.5" stroke="#dcdcdc" stroke-width="2.2"/><line x1="75" y1="400.7" x2="75" y2="465.5" stroke="#dcdcdc" stroke-width="2.2"/>
<g clip-path="url(#hc1)"><line x1="10.0" y1="460" x2="60.0" y2="405" stroke="#7ec0f5" stroke-width="2"/><line x1="17.5" y1="460" x2="67.5" y2="405" stroke="#7ec0f5" stroke-width="2"/><line x1="25.0" y1="460" x2="75.0" y2="405" stroke="#7ec0f5" stroke-width="2"/><line x1="32.5" y1="460" x2="82.5" y2="405" stroke="#7ec0f5" stroke-width="2"/><line x1="40.0" y1="460" x2="90.0" y2="405" stroke="#7ec0f5" stroke-width="2"/><line x1="47.5" y1="460" x2="97.5" y2="405" stroke="#7ec0f5" stroke-width="2"/><line x1="55.0" y1="460" x2="105.0" y2="405" stroke="#7ec0f5" stroke-width="2"/><line x1="62.5" y1="460" x2="112.5" y2="405" stroke="#7ec0f5" stroke-width="2"/><line x1="70.0" y1="460" x2="120.0" y2="405" stroke="#7ec0f5" stroke-width="2"/></g>
<line x1="108.5" y1="410" x2="168.3" y2="410" stroke="#dcdcdc" stroke-width="2.2"/><line x1="108.5" y1="451.5" x2="168.3" y2="451.5" stroke="#dcdcdc" stroke-width="2.2"/><line x1="117" y1="400.7" x2="117" y2="460" stroke="#dcdcdc" stroke-width="2.2"/><line x1="159" y1="400.7" x2="159" y2="460" stroke="#dcdcdc" stroke-width="2.2"/>
<g clip-path="url(#hc2)"><line x1="100" y1="455" x2="148" y2="405" stroke="#7ec0f5" stroke-width="2"/><line x1="107" y1="455" x2="155" y2="405" stroke="#7ec0f5" stroke-width="2"/><line x1="114" y1="455" x2="162" y2="405" stroke="#7ec0f5" stroke-width="2"/><line x1="121" y1="455" x2="169" y2="405" stroke="#7ec0f5" stroke-width="2"/><line x1="128" y1="455" x2="176" y2="405" stroke="#7ec0f5" stroke-width="2"/><line x1="135" y1="455" x2="183" y2="405" stroke="#7ec0f5" stroke-width="2"/><line x1="142" y1="455" x2="190" y2="405" stroke="#7ec0f5" stroke-width="2"/><line x1="149" y1="455" x2="197" y2="405" stroke="#7ec0f5" stroke-width="2"/></g>
<path d="M126,411 L128,406 L131,403 L145,403 L148,406 L150,411 Z" fill="#f2f2f2"/>
<rect x="140" y="433" width="32" height="32" fill="#94bfe8"/><path d="M140,465 L140,451 Q148,440 155,449 Q160,455 166,449 L172,453 L172,465 Z" fill="#6394c4"/><circle cx="163" cy="441" r="4.5" fill="#f5e3a0"/>
<polygon points="182,475 174,475 182,467" fill="#9a9a9a"/>
<rect x="208" y="412.5" width="40" height="41.2" fill="url(#gradh)"/><line x1="196" y1="410" x2="260" y2="410" stroke="#dcdcdc" stroke-width="2.2"/><line x1="196" y1="456" x2="260" y2="456" stroke="#dcdcdc" stroke-width="2.2"/><line x1="204.8" y1="400.7" x2="204.8" y2="465.5" stroke="#dcdcdc" stroke-width="2.2"/><line x1="251" y1="400.7" x2="251" y2="465.5" stroke="#dcdcdc" stroke-width="2.2"/>
<g stroke="#7ec0f5" stroke-width="2"><line x1="278.5" y1="400" x2="309.6" y2="400"/><line x1="278.5" y1="421.5" x2="309.6" y2="421.5"/><line x1="283" y1="394.8" x2="283" y2="426.8"/><line x1="305" y1="394.8" x2="305" y2="426.8"/></g>
<path d="M321.7,398 L342,398 L354.2,410 L354.2,424.2 L321.7,424.2 Z" fill="#dcdcdc"/><circle cx="337" cy="411" r="4.5" fill="#3a4352"/>
<defs><pattern id="stripe" width="6" height="6" patternUnits="userSpaceOnUse" patternTransform="rotate(45)"><rect width="3" height="6" fill="#dcdcdc"/></pattern></defs>
<rect x="277.6" y="438.5" width="32.8" height="32.8" fill="url(#stripe)"/><path d="M283,444 L292,444 L292,451 L305,451 L305,466 L283,466 Z" fill="#7ec0f5" stroke="#3a4352" stroke-width="2"/>
<rect x="22" y="569" width="38" height="29.5" fill="#6b707a" stroke="#dcdcdc" stroke-width="2"/><circle cx="58.9" cy="596" r="12.6" fill="#6b707a" stroke="#dcdcdc" stroke-width="2"/><path d="M60,584.4 L60,598.5 L47.3,598.5" fill="none" stroke="#dcdcdc" stroke-width="1.6"/><rect x="20" y="595" width="6" height="6" fill="#dcdcdc"/><polygon points="67.3,545.5 70.0,554.0 77.6,549.2 74.2,557.5 83.1,558.7 75.2,562.9 81.2,569.5 72.4,567.6 72.8,576.5 67.3,569.5 61.8,576.5 62.2,567.6 53.4,569.5 59.4,562.9 51.5,558.7 60.4,557.5 57.0,549.2 64.6,554.0" fill="#f4d07e"/>
<path d="M137,547 L160,547 L170,557 L170,591 Q162,590 158,582 L137,582 Z" fill="#94c6f3"/><path d="M160,547 L170,557 L160,557 Z" fill="#c7e2fa"/><rect x="112" y="565.7" width="38" height="26" fill="#6b707a" stroke="#dcdcdc" stroke-width="2"/><circle cx="148.9" cy="592.6" r="14.3" fill="#6b707a" stroke="#dcdcdc" stroke-width="2"/><path d="M150,579.3000000000001 L150,591.7 L135.6,591.7" fill="none" stroke="#dcdcdc" stroke-width="1.6"/><rect x="110" y="589" width="6" height="6" fill="#dcdcdc"/>
<rect x="200" y="563" width="40.6" height="31" fill="#6b707a" stroke="#dcdcdc" stroke-width="2"/><circle cx="240.6" cy="591.8" r="12.6" fill="#6b707a" stroke="#dcdcdc" stroke-width="2"/><path d="M240.6,580.1999999999999 L240.6,594 L229.0,594" fill="none" stroke="#dcdcdc" stroke-width="1.6"/><rect x="198" y="591" width="6" height="6" fill="#dcdcdc"/><g transform="translate(225.5,581.7) scale(1.05)"><g transform="rotate(-45)"><polygon points="0,0 8,-5 8,5" fill="#d0d0d0"/><rect x="8" y="-5" width="20" height="10" fill="#f4d07e"/><path d="M28,-5 h3 a5,5 0 0 1 0,10 h-3 z" fill="#ea6a62"/></g></g>
<path d="M284,549 L312,549 L343,580 L313,608.6 L284,580 Z" fill="#dcdcdc"/><circle cx="296" cy="560.7" r="3.8" fill="#3a4352"/><g stroke="#6b6b6b" stroke-width="1.8"><line x1="300" y1="583" x2="312" y2="595"/><line x1="306" y1="577" x2="318" y2="589"/></g><g transform="translate(314,577.5) scale(1.05)"><g transform="rotate(-45)"><polygon points="0,0 8,-5 8,5" fill="#d0d0d0"/><rect x="8" y="-5" width="20" height="10" fill="#f4d07e"/><path d="M28,-5 h3 a5,5 0 0 1 0,10 h-3 z" fill="#ea6a62"/></g></g>
<polygon points="358,619 350,619 358,611" fill="#9a9a9a"/>
<g transform="translate(14.3,632)"><path d="M0,0 L14,0 L30,16 L15,30 L0,15 Z" fill="#dcdcdc" transform="rotate(0)"/><circle cx="6" cy="6" r="2.2" fill="#3a4352"/><g stroke="#6b6b6b" stroke-width="1.5"><line x1="9" y1="14" x2="18" y2="23"/><line x1="13" y1="10" x2="22" y2="19"/></g></g>
<rect x="72" y="631" width="18" height="15" fill="#dcdcdc"/><rect x="72" y="631" width="18" height="3" fill="#a0a0a0"/><g fill="#555"><rect x="75" y="637" width="2" height="2"/><rect x="79" y="637" width="8" height="2"/><rect x="75" y="641" width="2" height="2"/><rect x="79" y="641" width="8" height="2"/></g><rect x="59" y="646" width="13" height="9" fill="#6b707a" stroke="#dcdcdc" stroke-width="2"/><circle cx="78" cy="655" r="7" fill="#6b707a" stroke="#dcdcdc" stroke-width="2"/><path d="M72,649 L72,655 L72,655" fill="none" stroke="#dcdcdc" stroke-width="1.6"/><rect x="56" y="652" width="6" height="6" fill="#dcdcdc"/>
<path d="M119,631 L134,631 L134,647 L119,647 Z" fill="#bdbdbd"/><rect x="122" y="631" width="9" height="5" fill="#f0f0f0"/><rect x="122" y="641" width="9" height="6" fill="#f0f0f0"/><rect x="103" y="646" width="14" height="10" fill="#6b707a" stroke="#dcdcdc" stroke-width="2"/><circle cx="122" cy="656" r="7" fill="#6b707a" stroke="#dcdcdc" stroke-width="2"/><path d="M117,650 L117,656 L116,656" fill="none" stroke="#dcdcdc" stroke-width="1.6"/><rect x="100" y="653" width="6" height="6" fill="#dcdcdc"/>
<rect x="146" y="632" width="16" height="16" fill="#86d49a"/><rect x="156" y="637" width="22" height="22" fill="none" stroke="#dcdcdc" stroke-width="1.8"/><rect x="152" y="646" width="18" height="17" fill="#3a4352" stroke="#dcdcdc" stroke-width="1.8"/><path d="M150,637 L150,656 L154,652 L158,660 L161,658 L157,651 L163,651 Z" fill="#f5f5f5" stroke="#333" stroke-width="0.8"/>
<rect x="191" y="632" width="27" height="27" fill="#6b707a" stroke="#dcdcdc" stroke-width="2"/><rect x="212" y="651" width="11" height="11" fill="#3a4352"/><path d="M213,656 h10 M218,651 v10" stroke="#7ec0f5" stroke-width="3.5"/>
<g transform="translate(234,634) scale(0.9)"><path d="M0,0 L14,0 L30,16 L15,30 L0,15 Z" fill="#dcdcdc" transform="rotate(0)"/><circle cx="6" cy="6" r="2.2" fill="#3a4352"/><g stroke="#6b6b6b" stroke-width="1.5"><line x1="9" y1="14" x2="18" y2="23"/><line x1="13" y1="10" x2="22" y2="19"/></g></g><path d="M252,638 A7,7 0 0 1 265,640" fill="none" stroke="#6ccf7c" stroke-width="2.2"/><path d="M265,645 A7,7 0 0 1 252,643" fill="none" stroke="#6ccf7c" stroke-width="2.2"/>
<g transform="translate(278,634) scale(0.9)"><path d="M0,0 L14,0 L30,16 L15,30 L0,15 Z" fill="#dcdcdc" transform="rotate(0)"/><circle cx="6" cy="6" r="2.2" fill="#3a4352"/><g stroke="#6b6b6b" stroke-width="1.5"><line x1="9" y1="14" x2="18" y2="23"/><line x1="13" y1="10" x2="22" y2="19"/></g></g><rect x="295" y="633" width="13" height="15" fill="#5a8fd0" stroke="#7ec0f5" stroke-width="1.5"/>
<rect x="327" y="632" width="12" height="9" fill="#6b707a" stroke="#dcdcdc" stroke-width="1.5"/><circle cx="338" cy="641" r="4" fill="#6b707a" stroke="#dcdcdc" stroke-width="1.5"/><path d="M345,644 L345,638 L350,638" fill="none" stroke="#f0f0f0" stroke-width="1.8"/><polygon points="343,640 345,636 347,640" fill="#f0f0f0"/><rect x="333" y="649" width="14" height="10" fill="#4e6c92" stroke="#7ec0f5" stroke-width="1.5"/><circle cx="347" cy="657" r="5" fill="#4e6c92" stroke="#7ec0f5" stroke-width="1.5"/>
<g fill="#f5f5f5"><rect x="50" y="748" width="4.5" height="44"/><rect x="30" y="767" width="44" height="4.5"/><polygon points="52.2,736.4 42,752 62.4,752"/><polygon points="52.2,801.2 42,785.6 62.4,785.6"/><polygon points="20.2,769.2 36,759 36,779.4"/><polygon points="84.1,769.2 68.3,759 68.3,779.4"/></g>
<rect x="105" y="731" width="13" height="23" fill="#bdbdbd"/><path d="M111,737 L124,737 L131,744 L131,763 L111,763 Z" fill="#dcdcdc" stroke="#3a4352" stroke-width="1.5"/>
<path d="M160,736 A13,13 0 1 0 174.5,749" fill="none" stroke="#f0f0f0" stroke-width="2"/><polygon points="159,730.5 169,736 159,741.5" fill="#f0f0f0"/>
<g stroke="#7ec0f5" stroke-width="2"><line x1="196" y1="742" x2="203" y2="742"/><line x1="208" y1="742" x2="215" y2="742"/><line x1="220" y1="742" x2="228" y2="742"/></g><line x1="244" y1="742" x2="260" y2="742" stroke="#dcdcdc" stroke-width="2"/>
<g fill="#f5f5f5"><polygon points="233,738 240,741 239,777 231,778"/><polygon points="211,752 217,746 240,774 234,780"/></g><ellipse cx="231" cy="792" rx="6" ry="8.5" transform="rotate(15 231 792)" fill="none" stroke="#f5f5f5" stroke-width="3.5"/><ellipse cx="247" cy="786" rx="8.5" ry="6" transform="rotate(-40 247 786)" fill="none" stroke="#f5f5f5" stroke-width="3.5"/><circle cx="234.5" cy="776" r="1.8" fill="#3a4352"/>
<polygon points="270,810.5 262,810.5 270,802.5" fill="#9a9a9a"/>
<path d="M279,763 L279,756 M279,752 A18,18 0 0 1 296,734" fill="none" stroke="#dcdcdc" stroke-width="2"/><path d="M279,751 A17,17 0 0 1 296,733.5" fill="none" stroke="#7ec0f5" stroke-width="2"/><line x1="298" y1="732" x2="310" y2="732" stroke="#dcdcdc" stroke-width="2"/><polygon points="316,768.5 308,768.5 316,760.5" fill="#9a9a9a"/>
<rect x="324.5" y="733.5" width="10" height="10" fill="none" stroke="#dcdcdc" stroke-width="1.8"/><rect x="340.5" y="733.5" width="10" height="10" fill="none" stroke="#7ec0f5" stroke-width="1.8"/><rect x="324.5" y="750.5" width="10" height="10" fill="none" stroke="#7ec0f5" stroke-width="1.8"/><rect x="340.5" y="750.5" width="10" height="10" fill="none" stroke="#7ec0f5" stroke-width="1.8"/><polygon points="360,768.5 352,768.5 360,760.5" fill="#9a9a9a"/>
<polygon points="103.5,805 116,778 116,805" fill="none" stroke="#dcdcdc" stroke-width="1.8"/><polygon points="119,805 119,778 132,805" fill="none" stroke="#7ec0f5" stroke-width="1.8"/>
<rect x="147.5" y="777.5" width="20" height="18" fill="none" stroke="#f0f0f0" stroke-width="1.5" stroke-dasharray="3,2"/><polygon points="164,789 178,800 171,801 174,807 170,808 167,802 164,806" fill="#f0f0f0"/><path d="M172,786 h6 M175,783 v6" stroke="#f0f0f0" stroke-width="1.5"/>
<path d="M309.6,780.5 L290,780.5 A11.5,11.5 0 0 0 290,803.5 L309.6,803.5" fill="none" stroke="#7ec0f5" stroke-width="2"/><path d="M309.6,786 L291,786 A6,6 0 0 0 291,798 L309.6,798" fill="none" stroke="#dcdcdc" stroke-width="2"/>
<polygon points="322.5,804.5 322.5,787 331,778 353,778 353,795 345,804.5" fill="none" stroke="#7ec0f5" stroke-width="1.8"/><rect x="327" y="787.5" width="18" height="17" fill="#3a4352" stroke="#dcdcdc" stroke-width="1.8"/><line x1="331" y1="787" x2="339" y2="779" stroke="#7ec0f5" stroke-width="1.8"/>
<polyline points="26,824 15,824 15,855 26,855" fill="none" stroke="#dcdcdc" stroke-width="1.8"/><line x1="26" y1="824" x2="26" y2="845" stroke="#dcdcdc" stroke-width="1.8"/><polyline points="30,824 36,824 45.5,855 30,855" fill="none" stroke="#7ec0f5" stroke-width="1.8"/><path d="M22,847 h12" stroke="#f0f0f0" stroke-width="1.8"/><polygon points="38,847 32,843 32,851" fill="#f0f0f0"/>
<polygon points="58,826 60,824 76,824 76,836 74,838 58,838" fill="#dcdcdc"/><rect x="76" y="836" width="14" height="14" fill="#94c6f3"/><path d="M60,843 v5 h8" fill="none" stroke="#f0f0f0" stroke-width="1.6"/><polygon points="71,848 66,845 66,851" fill="#f0f0f0"/>
<rect x="102.5" y="823.5" width="31" height="31" fill="none" stroke="#7ec0f5" stroke-width="1.8"/><rect x="96" y="834" width="22" height="25" fill="#3a4352"/><rect x="102.5" y="838.5" width="16" height="16" fill="none" stroke="#dcdcdc" stroke-width="1.8"/><rect x="119" y="850" width="16" height="8" fill="#3a4352"/><line x1="122" y1="854.5" x2="134" y2="854.5" stroke="#7ec0f5" stroke-width="1.8"/>
<polyline points="159,828 146.5,828 146.5,853 176.5,853 176.5,828 172,828" fill="none" stroke="#dcdcdc" stroke-width="1.8"/><line x1="166" y1="823" x2="166" y2="834" stroke="#7ec0f5" stroke-width="1.8"/><polygon points="184,861 176,861 184,853" fill="#9a9a9a"/>
<line x1="190" y1="839.5" x2="222" y2="839.5" stroke="#dcdcdc" stroke-width="1.8"/><polygon points="204,839.5 196,834.5 196,844.5" fill="#7ec0f5"/><polygon points="208,839.5 216,834.5 216,844.5" fill="#7ec0f5"/>
<rect x="234" y="825" width="20" height="12" fill="#b0b0b0"/><rect x="247" y="838" width="19" height="16" fill="none" stroke="#dcdcdc" stroke-width="1.8"/><polygon points="252,850 262,850 262,842" fill="none" stroke="#dcdcdc" stroke-width="1.2"/><path d="M257,827 h5 v6" fill="none" stroke="#f0f0f0" stroke-width="1.6"/><path d="M243,852 v-6 h-4" fill="none" stroke="#f0f0f0" stroke-width="1.6"/>
<rect x="278" y="824" width="18" height="14" fill="#6b707a" stroke="#dcdcdc" stroke-width="1.6"/><circle cx="295.5" cy="837" r="6.5" fill="#6b707a" stroke="#dcdcdc" stroke-width="1.6"/><path d="M284,845 v7 h9" fill="none" stroke="#f0f0f0" stroke-width="1.6"/><polygon points="297,852 292,848 292,856" fill="#f0f0f0"/><circle cx="304" cy="850" r="5" fill="none" stroke="#7ec0f5" stroke-width="1.6"/>
<line x1="338" y1="823" x2="338" y2="846" stroke="#c9a36f" stroke-width="1.8"/><polygon points="335,843 341,843 343,848 333,848" fill="#c9a36f"/><polygon points="333,848 343,848 348,855 328,855" fill="#f4d07e"/>
<path d="M26,988.6 L47,933 L57,933 L78.2,988.6 L69.5,988.6 L64.5,975 L39.5,975 L34.5,988.6 Z M42,968 L62,968 L52,941 Z" fill="#dcdcdc" fill-rule="evenodd"/>
<path d="M107.7,979 L125.5,929 L135,929 L153,979 L145,979 L141,967 L119.5,967 L115.5,979 Z M122,960.5 L138.5,960.5 L130.3,937 Z" fill="#dcdcdc" fill-rule="evenodd"/><g transform="translate(138,993) scale(0.85)"><g transform="rotate(-45)"><path d="M0,0 C6,-9 18,-9 24,-7 L24,7 C18,9 6,9 0,0 Z" fill="#c9a370"/><rect x="25" y="-5" width="20" height="10" fill="#e6e6e6"/></g></g>
<path d="M194,951 L204,924 L208,924 L218,951" fill="none" stroke="#dcdcdc" stroke-width="2"/><line x1="199" y1="942" x2="213" y2="942" stroke="#dcdcdc" stroke-width="2"/><line x1="190" y1="954.5" x2="222" y2="954.5" stroke="#7ec0f5" stroke-width="2"/>
<text x="234.5" y="937" font-family="Liberation Sans" font-weight="bold" font-size="11.5" fill="#dcdcdc" letter-spacing="0.5">ABC</text><polyline points="241,945 247,951 257,939" fill="none" stroke="#6ccf7c" stroke-width="3.5"/>
<rect x="278" y="923" width="18" height="18" fill="#f0f0f0"/><g fill="#2f6fd6"><rect x="282" y="927" width="2" height="2"/><rect x="286" y="927" width="7" height="2"/><rect x="282" y="931" width="2" height="2"/><rect x="286" y="931" width="7" height="2"/><rect x="282" y="935" width="2" height="2"/><rect x="286" y="935" width="7" height="2"/></g><rect x="286" y="937" width="24.5" height="8" fill="#94c6f3"/><rect x="286" y="947" width="24.5" height="8" fill="#dcdcdc"/><text x="297.5" y="935" font-family="Liberation Sans" font-weight="bold" font-size="13" fill="#7ec0f5">A</text>
<text x="323" y="934" font-family="Liberation Sans" font-weight="bold" font-size="9.5" fill="#dcdcdc" letter-spacing="0.4">PDF</text><path d="M326,937 v9 h7" fill="none" stroke="#f0f0f0" stroke-width="1.6"/><polygon points="336,946 331,942.5 331,949.5" fill="#f0f0f0"/><text x="337" y="953.5" font-family="Liberation Sans" font-size="19" fill="#7ec0f5">A</text>
<rect x="190" y="967" width="21" height="23" fill="#dcdcdc"/><g stroke="#666" stroke-width="1.5"><line x1="194" y1="972" x2="207" y2="972"/><line x1="194" y1="976" x2="207" y2="976"/><line x1="194" y1="980" x2="207" y2="980"/></g><path d="M201,1000 L209,981 L214,981 L222,1000" fill="#3a4352" stroke="#dcdcdc" stroke-width="2"/><line x1="205" y1="994" x2="218" y2="994" stroke="#dcdcdc" stroke-width="1.8"/><path d="M214,970 h5 v8" fill="none" stroke="#f0f0f0" stroke-width="1.5"/>
<circle cx="248" cy="979" r="11" fill="none" stroke="#f0f0f0" stroke-width="1.8"/><path d="M243,985 L248,972 L253,985 M245,981 h6" fill="none" stroke="#dcdcdc" stroke-width="1.6"/><line x1="257" y1="988" x2="265" y2="997" stroke="#c9a36f" stroke-width="3"/>
<text x="279" y="982" font-family="Liberation Sans" font-weight="bold" font-size="12" fill="#7ec0f5">A</text><rect x="278" y="981.5" width="24" height="7" fill="#94c6f3"/><rect x="278" y="991" width="24" height="8.5" fill="#dcdcdc"/><path d="M296,973 A6,6 0 0 1 308,971" fill="none" stroke="#6ccf7c" stroke-width="2"/><path d="M309,977 A6,6 0 0 1 297,979" fill="none" stroke="#6ccf7c" stroke-width="2"/>
<text x="321.5" y="975.5" font-family="Liberation Sans" font-weight="bold" font-size="9.5" fill="#dcdcdc" letter-spacing="0.4">PDF</text><path d="M324,979 v9 h7" fill="none" stroke="#f0f0f0" stroke-width="1.6"/><polygon points="334,988 329,984.5 329,991.5" fill="#f0f0f0"/><path d="M336,996 L342,980 L346,996" fill="none" stroke="#9a9a9a" stroke-width="1.6"/><path d="M341,998 L352,985" stroke="#7ec0f5" stroke-width="2.5"/><circle cx="351" cy="985" r="3" fill="none" stroke="#7ec0f5" stroke-width="2"/>
<line x1="21" y1="1073" x2="21" y2="1137" stroke="#dcdcdc" stroke-width="2.2"/><line x1="82.8" y1="1073" x2="82.8" y2="1137" stroke="#dcdcdc" stroke-width="2.2"/><line x1="24" y1="1085.7" x2="79.8" y2="1085.7" stroke="#dcdcdc" stroke-width="2.2"/><polygon points="22.5,1085.7 30.5,1080.9 30.5,1090.5" fill="#dcdcdc"/><polygon points="81.3,1085.7 73.3,1080.9 73.3,1090.5" fill="#dcdcdc"/>
<line x1="40.0" y1="1131.0" x2="28.0" y2="1131.0" stroke="#f4d07e" stroke-width="3.5" stroke-linecap="round"/><line x1="43.5" y1="1122.5" x2="35.0" y2="1114.0" stroke="#f4d07e" stroke-width="3.5" stroke-linecap="round"/><line x1="52.0" y1="1119.0" x2="52.0" y2="1107.0" stroke="#f4d07e" stroke-width="3.5" stroke-linecap="round"/><line x1="60.5" y1="1122.5" x2="69.0" y2="1114.0" stroke="#f4d07e" stroke-width="3.5" stroke-linecap="round"/><line x1="64.0" y1="1131.0" x2="76.0" y2="1131.0" stroke="#f4d07e" stroke-width="3.5" stroke-linecap="round"/>
<line x1="109" y1="1095.8" x2="109" y2="1130" stroke="#dcdcdc" stroke-width="2.2"/><line x1="171" y1="1095.8" x2="171" y2="1130" stroke="#dcdcdc" stroke-width="2.2"/><line x1="112" y1="1113.4" x2="168" y2="1113.4" stroke="#dcdcdc" stroke-width="2.2"/><polygon points="110.5,1113.4 118.5,1108.6000000000001 118.5,1118.2" fill="#dcdcdc"/><polygon points="169.5,1113.4 161.5,1108.6000000000001 161.5,1118.2" fill="#dcdcdc"/><g transform="translate(138,1110) scale(0.85)"><g transform="rotate(-45)"><path d="M0,0 C6,-9 18,-9 24,-7 L24,7 C18,9 6,9 0,0 Z" fill="#c9a370"/><rect x="25" y="-5" width="20" height="10" fill="#e6e6e6"/></g></g>
<line x1="190" y1="1068.8" x2="190" y2="1097.4" stroke="#dcdcdc" stroke-width="1.8"/><line x1="222" y1="1068.8" x2="222" y2="1097.4" stroke="#dcdcdc" stroke-width="1.8"/><line x1="193" y1="1078" x2="219" y2="1078" stroke="#7ec0f5" stroke-width="1.8"/><polygon points="191.5,1078 196.5,1075.0 196.5,1081.0" fill="#7ec0f5"/><polygon points="220.5,1078 215.5,1075.0 215.5,1081.0" fill="#7ec0f5"/><polygon points="228,1103.5 220,1103.5 228,1095.5" fill="#9a9a9a"/>
<circle cx="250" cy="1083" r="11.5" fill="none" stroke="#dcdcdc" stroke-width="1.8"/><g stroke="#7ec0f5" stroke-width="1.8"><line x1="250" y1="1068" x2="250" y2="1098"/><line x1="236" y1="1083" x2="265" y2="1083"/></g><rect x="247" y="1080" width="6" height="6" fill="#3a4352"/><path d="M250,1081 v4 M248,1083 h4" stroke="#7ec0f5" stroke-width="1.5"/><circle cx="261.7" cy="1070.5" r="9.3" fill="#e5773f" stroke="#f5e6dc" stroke-width="2"/><polygon points="272,1103.5 264,1103.5 272,1095.5" fill="#9a9a9a"/>
<line x1="291" y1="1067" x2="291" y2="1093" stroke="#dcdcdc" stroke-width="1.8"/><polygon points="291,1095 285,1086 297,1086" fill="#dcdcdc"/><line x1="285" y1="1098" x2="297" y2="1098" stroke="#dcdcdc" stroke-width="1.8"/><line x1="278" y1="1080" x2="284" y2="1080" stroke="#7ec0f5" stroke-width="1.8"/><line x1="296" y1="1080" x2="302" y2="1080" stroke="#7ec0f5" stroke-width="1.8"/><polygon points="307,1080 299,1075 299,1085" fill="#7ec0f5"/><line x1="309.5" y1="1072" x2="309.5" y2="1087" stroke="#dcdcdc" stroke-width="1.8"/>
<line x1="325" y1="1071" x2="351" y2="1071" stroke="#dcdcdc" stroke-width="1.8"/><polygon points="322,1071 328,1067 328,1075" fill="#dcdcdc"/><polygon points="354,1071 348,1067 348,1075" fill="#dcdcdc"/><line x1="325" y1="1095" x2="351" y2="1095" stroke="#dcdcdc" stroke-width="1.8"/><polygon points="322,1095 328,1091 328,1099" fill="#dcdcdc"/><polygon points="354,1095 348,1091 348,1099" fill="#dcdcdc"/><rect x="334" y="1074" width="8" height="18" fill="#f4d07e"/><g stroke="#8a7a50" stroke-width="1"><line x1="334" y1="1078" x2="337" y2="1078"/><line x1="334" y1="1082" x2="337" y2="1082"/><line x1="334" y1="1086" x2="337" y2="1086"/></g>
<g stroke="#dcdcdc" stroke-width="1.8"><line x1="192" y1="1114" x2="192" y2="1141"/><line x1="206" y1="1114" x2="206" y2="1141"/><line x1="220" y1="1128" x2="220" y2="1141"/></g><line x1="195" y1="1122" x2="203" y2="1122" stroke="#7ec0f5" stroke-width="1.8"/><polygon points="194,1122 198,1119 198,1125" fill="#7ec0f5"/><polygon points="204,1122 200,1119 200,1125" fill="#7ec0f5"/><line x1="208" y1="1122" x2="212" y2="1122" stroke="#7ec0f5" stroke-width="1.8"/><circle cx="217.9" cy="1115" r="9.3" fill="#e5773f" stroke="#f5e6dc" stroke-width="2"/><polygon points="228,1148 220,1148 228,1140" fill="#9a9a9a"/>
<rect x="235" y="1116" width="31" height="22" fill="none" stroke="#dcdcdc" stroke-width="1.8"/><line x1="250" y1="1116" x2="250" y2="1138" stroke="#dcdcdc" stroke-width="1.8"/><circle cx="242.5" cy="1127" r="4" fill="none" stroke="#f0f0f0" stroke-width="1.5"/><path d="M242.5,1120 v14 M236,1127 h13" stroke="#f0f0f0" stroke-width="1.3"/><text x="252" y="1135" font-family="Liberation Sans" font-size="13" fill="#f0f0f0">.1</text>
<line x1="279" y1="1111" x2="279" y2="1143" stroke="#dcdcdc" stroke-width="1.8"/><line x1="309.5" y1="1111" x2="309.5" y2="1143" stroke="#dcdcdc" stroke-width="1.8"/><line x1="282" y1="1118" x2="306.5" y2="1118" stroke="#dcdcdc" stroke-width="1.8"/><polygon points="280.5,1118 285.5,1115.0 285.5,1121.0" fill="#dcdcdc"/><polygon points="308.0,1118 303.0,1115.0 303.0,1121.0" fill="#dcdcdc"/><polyline points="287,1131 292,1136 301,1127" fill="none" stroke="#6ccf7c" stroke-width="3"/>
<line x1="322.5" y1="1124" x2="332" y2="1115" stroke="#dcdcdc" stroke-width="1.8"/><line x1="342" y1="1142" x2="354" y2="1132" stroke="#dcdcdc" stroke-width="1.8"/><line x1="329" y1="1121" x2="347" y2="1136" stroke="#dcdcdc" stroke-width="1.6"/><polygon points="327,1119 334,1121 330,1125" fill="#dcdcdc"/><polygon points="349,1138 342,1136 346,1132" fill="#dcdcdc"/><text x="340" y="1126" font-family="Liberation Sans" font-size="13" fill="#7ec0f5">x</text><polygon points="360,1148 352,1148 360,1140" fill="#9a9a9a"/>
<polyline points="24,1272 45.4,1233.2 54.7,1233.2" fill="none" stroke="#dcdcdc" stroke-width="2"/><polygon points="20,1279 21,1266 32,1272" fill="#dcdcdc"/><circle cx="69" cy="1234" r="14.6" fill="none" stroke="#dcdcdc" stroke-width="2"/><circle cx="86.2" cy="1214.7" r="9.7" fill="#e5773f" stroke="#f5e6dc" stroke-width="2"/>
<polyline points="112,1272 133,1233.2 142.7,1233.2" fill="none" stroke="#dcdcdc" stroke-width="2"/><polygon points="108,1279 109,1266 120,1272" fill="#dcdcdc"/><circle cx="156.8" cy="1234" r="14.6" fill="none" stroke="#dcdcdc" stroke-width="2"/><g transform="translate(138,1281) scale(0.85)"><g transform="rotate(-45)"><path d="M0,0 C6,-9 18,-9 24,-7 L24,7 C18,9 6,9 0,0 Z" fill="#c9a370"/><rect x="25" y="-5" width="20" height="10" fill="#e6e6e6"/></g></g>
<path d="M197,1212 v11 M191.5,1217.5 h11" stroke="#6ccf7c" stroke-width="3"/><polyline points="192,1242 200,1227 208,1242" fill="none" stroke="#dcdcdc" stroke-width="1.6"/><polygon points="191,1243 192,1235 197,1239" fill="#dcdcdc"/><polygon points="209,1243 203,1239 208,1235" fill="#dcdcdc"/><line x1="200" y1="1227" x2="212" y2="1227" stroke="#dcdcdc" stroke-width="1.6"/><circle cx="216.5" cy="1226" r="3.8" fill="none" stroke="#dcdcdc" stroke-width="1.6"/>
<polyline points="236,1228 241,1216 251,1216" fill="none" stroke="#dcdcdc" stroke-width="1.6"/><polygon points="234,1230 235,1222 240,1226" fill="#dcdcdc"/><circle cx="256.5" cy="1216" r="3.8" fill="none" stroke="#dcdcdc" stroke-width="1.6"/><polyline points="239,1242 244,1229 251,1229" fill="none" stroke="#dcdcdc" stroke-width="1.6"/><polygon points="238,1244 239,1236 244,1240" fill="#dcdcdc"/><circle cx="256.5" cy="1228" r="3.8" fill="none" stroke="#dcdcdc" stroke-width="1.6"/><line x1="265" y1="1211" x2="265" y2="1243" stroke="#7ec0f5" stroke-width="2"/>
<polyline points="280,1240 289,1225 296,1225" fill="none" stroke="#dcdcdc" stroke-width="1.6"/><polygon points="278,1242 279,1233 285,1237" fill="#dcdcdc"/><circle cx="302.5" cy="1220" r="6" fill="none" stroke="#dcdcdc" stroke-width="1.6"/><polygon points="301,1228 296,1236 300,1236 297,1243 308,1233 303,1233 306,1228" fill="#f4d07e"/>
<path d="M191.5,1257 L201,1266 M201,1257 L191.5,1266" stroke="#ea6a62" stroke-width="3"/><polyline points="192,1286 200,1271 208,1286" fill="none" stroke="#dcdcdc" stroke-width="1.6"/><polygon points="191,1287 192,1279 197,1283" fill="#dcdcdc"/><polygon points="209,1287 203,1283 208,1279" fill="#dcdcdc"/><line x1="200" y1="1271" x2="212" y2="1271" stroke="#dcdcdc" stroke-width="1.6"/><circle cx="216.5" cy="1270" r="3.8" fill="none" stroke="#dcdcdc" stroke-width="1.6"/>
<polyline points="236,1283 244,1264 251,1264" fill="none" stroke="#dcdcdc" stroke-width="1.6"/><polygon points="234,1285 235,1277 241,1281" fill="#dcdcdc"/><circle cx="259" cy="1264" r="6" fill="none" stroke="#dcdcdc" stroke-width="1.6"/><circle cx="259" cy="1278" r="6" fill="none" stroke="#dcdcdc" stroke-width="1.6"/>
<rect x="22" y="1367" width="60" height="52.5" fill="none" stroke="#dcdcdc" stroke-width="2"/><line x1="22" y1="1383" x2="82" y2="1383" stroke="#dcdcdc" stroke-width="2"/><line x1="22" y1="1395.2" x2="82" y2="1395.2" stroke="#dcdcdc" stroke-width="2"/><line x1="22" y1="1407.3" x2="82" y2="1407.3" stroke="#dcdcdc" stroke-width="2"/><line x1="41.7" y1="1383" x2="41.7" y2="1419.5" stroke="#dcdcdc" stroke-width="2"/><line x1="62.6" y1="1383" x2="62.6" y2="1419.5" stroke="#dcdcdc" stroke-width="2"/>
<rect x="109" y="1362" width="54.5" height="52.5" fill="none" stroke="#dcdcdc" stroke-width="2"/><line x1="109" y1="1378" x2="163.5" y2="1378" stroke="#dcdcdc" stroke-width="2"/><line x1="109" y1="1390" x2="163.5" y2="1390" stroke="#dcdcdc" stroke-width="2"/><line x1="109" y1="1402" x2="163.5" y2="1402" stroke="#dcdcdc" stroke-width="2"/><line x1="126.5" y1="1378" x2="126.5" y2="1414.5" stroke="#dcdcdc" stroke-width="2"/><line x1="145" y1="1378" x2="145" y2="1414.5" stroke="#dcdcdc" stroke-width="2"/><g transform="translate(138,1424.6) scale(0.85)"><g transform="rotate(-45)"><path d="M0,0 C6,-9 18,-9 24,-7 L24,7 C18,9 6,9 0,0 Z" fill="#c9a370"/><rect x="25" y="-5" width="20" height="10" fill="#e6e6e6"/></g></g>
<path d="M192,1363 L218,1363 L222,1369 L222,1387 L192,1387 Z" fill="#dcdcdc"/><rect x="197" y="1366" width="12" height="10" fill="#9a9a9a"/><rect x="206" y="1374" width="16" height="13" fill="#f0f0f0" stroke="#3a4352" stroke-width="1"/><g fill="#444"><rect x="209" y="1378" width="2" height="2"/><rect x="213" y="1378" width="7" height="2"/><rect x="209" y="1382" width="2" height="2"/><rect x="213" y="1382" width="7" height="2"/></g><g transform="translate(190,1358)"><path d="M4,1 a4,4 0 0 1 8,0 v6 a4,4 0 0 1 -8,0 z M4,9 a4,4 0 0 1 8,0 v6 a4,4 0 0 1 -8,0 z" fill="none" stroke="#e8a06a" stroke-width="2.2"/></g>
<path d="M236,1363 L260,1363 L266,1369 L266,1385 L236,1385 Z" fill="#dcdcdc"/><g fill="#8a8a8a"><rect x="241" y="1367" width="4" height="3"/><rect x="246" y="1367" width="4" height="3"/><rect x="241" y="1371" width="4" height="3"/><rect x="246" y="1371" width="4" height="3"/></g><rect x="257" y="1367" width="4" height="12" fill="#7ec0f5"/><polygon points="253,1378 265,1378 259,1386" fill="#7ec0f5"/><g transform="translate(234,1358)"><path d="M4,1 a4,4 0 0 1 8,0 v6 a4,4 0 0 1 -8,0 z M4,9 a4,4 0 0 1 8,0 v6 a4,4 0 0 1 -8,0 z" fill="none" stroke="#e8a06a" stroke-width="2.2"/></g>
<rect x="190" y="1399" width="18" height="18" fill="#f0f0f0"/><g fill="#2f6fd6"><rect x="194" y="1403" width="2" height="2"/><rect x="198" y="1403" width="7" height="2"/><rect x="194" y="1407" width="2" height="2"/><rect x="198" y="1407" width="7" height="2"/><rect x="194" y="1411" width="2" height="2"/><rect x="198" y="1411" width="7" height="2"/></g><rect x="198" y="1413" width="24" height="7" fill="#94c6f3"/><rect x="198" y="1423" width="24" height="8.5" fill="#dcdcdc"/><text x="209.5" y="1411" font-family="Liberation Sans" font-weight="bold" font-size="13" fill="#7ec0f5">A</text>
<rect x="234" y="1414" width="32" height="17.5" fill="#dcdcdc"/><rect x="239" y="1406" width="6" height="8" fill="#dcdcdc"/><g fill="#8a8a8a"><rect x="241" y="1416" width="5" height="3"/><rect x="247" y="1416" width="5" height="3"/><rect x="253" y="1416" width="5" height="3"/><rect x="241" y="1420" width="17" height="3"/></g><path d="M252,1404 A6,6 0 0 1 264,1402" fill="none" stroke="#6ccf7c" stroke-width="2.2"/><path d="M265,1408 A6,6 0 0 1 253,1410" fill="none" stroke="#6ccf7c" stroke-width="2.2"/><g transform="translate(233,1400)"><path d="M4,1 a4,4 0 0 1 8,0 v6 a4,4 0 0 1 -8,0 z M4,9 a4,4 0 0 1 8,0 v6 a4,4 0 0 1 -8,0 z" fill="none" stroke="#e8a06a" stroke-width="2.2"/></g>
<line x1="22.7" y1="1505.4" x2="22.7" y2="1563" stroke="#ea6a62" stroke-width="2"/><rect x="20" y="1562.6" width="6.5" height="6.7" fill="#ea6a62"/><line x1="28" y1="1566" x2="84" y2="1566" stroke="#dcdcdc" stroke-width="2"/><polygon points="94,1578.5 86,1578.5 94,1570.5" fill="#9a9a9a"/>
<rect x="102" y="1513" width="12" height="10" fill="#dcdcdc"/><line x1="115" y1="1499" x2="115" y2="1523" stroke="#ea6a62" stroke-width="2"/><rect x="116" y="1499" width="12" height="10" fill="#94c6f3"/><polygon points="128,1514 121,1523 125,1523 120,1531 133,1520 128,1520 131,1514" fill="#f4d07e"/>
<polyline points="150,1500 147,1500 147,1526 150,1526" fill="none" stroke="#f0f0f0" stroke-width="1.8"/><polyline points="170,1500 173,1500 173,1508" fill="none" stroke="#f0f0f0" stroke-width="1.8"/><line x1="153" y1="1510" x2="164" y2="1521" stroke="#ea6a62" stroke-width="1.6"/><line x1="158" y1="1514" x2="168" y2="1505" stroke="#bdbdbd" stroke-width="1.6"/><circle cx="172" cy="1520" r="6" fill="#f4d07e"/><path d="M169,1526 h6 v2 a3,3 0 0 1 -6,0 z" fill="#f0f0f0"/>
<line x1="197" y1="1504.6" x2="197" y2="1568.5" stroke="#dcdcdc" stroke-width="2"/><line x1="258.8" y1="1504.6" x2="258.8" y2="1568.5" stroke="#dcdcdc" stroke-width="2"/><line x1="200" y1="1518" x2="255.8" y2="1518" stroke="#dcdcdc" stroke-width="2"/><polygon points="198.5,1518 206.5,1513.2 206.5,1522.8" fill="#dcdcdc"/><polygon points="257.3,1518 249.3,1513.2 249.3,1522.8" fill="#dcdcdc"/><path d="M219,1545 v-6 a9,9 0 0 1 18,0 v6" fill="none" stroke="#f4d07e" stroke-width="4"/><rect x="215" y="1544" width="26" height="21" fill="#f4d07e"/><rect x="227" y="1551" width="2" height="6" fill="#5a4a20"/><polygon points="270,1578.5 262,1578.5 270,1570.5" fill="#9a9a9a"/>
<line x1="278.6" y1="1498.7" x2="278.6" y2="1530.6" stroke="#dcdcdc" stroke-width="1.8"/><line x1="309.4" y1="1498.7" x2="309.4" y2="1530.6" stroke="#dcdcdc" stroke-width="1.8"/><line x1="281.6" y1="1506" x2="306.4" y2="1506" stroke="#dcdcdc" stroke-width="1.8"/><polygon points="280.1,1506 285.1,1503.0 285.1,1509.0" fill="#dcdcdc"/><polygon points="307.9,1506 302.9,1503.0 302.9,1509.0" fill="#dcdcdc"/><path d="M287,1522 A7,7 0 0 1 292,1512" fill="none" stroke="#7ec0f5" stroke-width="2"/><path d="M299,1514 A7,7 0 0 1 294,1527" fill="none" stroke="#ea6a62" stroke-width="2"/>
<line x1="323" y1="1499" x2="323" y2="1531" stroke="#dcdcdc" stroke-width="1.8"/><line x1="353" y1="1499" x2="353" y2="1531" stroke="#dcdcdc" stroke-width="1.8"/><line x1="326" y1="1506" x2="350" y2="1506" stroke="#dcdcdc" stroke-width="1.8"/><polygon points="324.5,1506 329.5,1503.0 329.5,1509.0" fill="#dcdcdc"/><polygon points="351.5,1506 346.5,1503.0 346.5,1509.0" fill="#dcdcdc"/><circle cx="348" cy="1520" r="6" fill="#f4d07e"/><path d="M345,1526 h6 v2 a3,3 0 0 1 -6,0 z" fill="#f0f0f0"/>
<polyline points="106,1544 103,1544 103,1570 106,1570" fill="none" stroke="#f0f0f0" stroke-width="1.8"/><polyline points="126,1544 129,1544 129,1552" fill="none" stroke="#f0f0f0" stroke-width="1.8"/><line x1="109" y1="1554" x2="120" y2="1565" stroke="#ea6a62" stroke-width="1.6"/><line x1="114" y1="1558" x2="124" y2="1549" stroke="#bdbdbd" stroke-width="1.6"/><path d="M128,1558 A6,6 0 0 0 128,1570 Z" fill="#f4d07e"/><path d="M128,1558 A6,6 0 0 1 128,1570 Z" fill="#72cfd8"/><path d="M125,1570 h6 v2 a3,3 0 0 1 -6,0 z" fill="#f0f0f0"/>
<polyline points="150,1544 147,1544 147,1570 150,1570" fill="none" stroke="#f0f0f0" stroke-width="1.8"/><polyline points="170,1544 173,1544 173,1552" fill="none" stroke="#f0f0f0" stroke-width="1.8"/><line x1="153" y1="1554" x2="164" y2="1565" stroke="#ea6a62" stroke-width="1.6"/><line x1="158" y1="1558" x2="168" y2="1549" stroke="#bdbdbd" stroke-width="1.6"/><circle cx="172" cy="1564" r="6" fill="#72cfd8"/><path d="M169,1570 h6 v2 a3,3 0 0 1 -6,0 z" fill="#f0f0f0"/>
<line x1="278.6" y1="1543" x2="278.6" y2="1575" stroke="#dcdcdc" stroke-width="1.8"/><line x1="308.6" y1="1543" x2="308.6" y2="1575" stroke="#dcdcdc" stroke-width="1.8"/><line x1="281.6" y1="1550" x2="305.6" y2="1550" stroke="#dcdcdc" stroke-width="1.8"/><polygon points="280.1,1550 285.1,1547.0 285.1,1553.0" fill="#dcdcdc"/><polygon points="307.1,1550 302.1,1547.0 302.1,1553.0" fill="#dcdcdc"/><path d="M303.6,1558 A6,6 0 0 0 303.6,1570 Z" fill="#f4d07e"/><path d="M303.6,1558 A6,6 0 0 1 303.6,1570 Z" fill="#72cfd8"/><path d="M300.6,1570 h6 v2 a3,3 0 0 1 -6,0 z" fill="#f0f0f0"/>
<line x1="323" y1="1543" x2="323" y2="1575" stroke="#dcdcdc" stroke-width="1.8"/><line x1="353" y1="1543" x2="353" y2="1575" stroke="#dcdcdc" stroke-width="1.8"/><line x1="326" y1="1550" x2="350" y2="1550" stroke="#dcdcdc" stroke-width="1.8"/><polygon points="324.5,1550 329.5,1547.0 329.5,1553.0" fill="#dcdcdc"/><polygon points="351.5,1550 346.5,1547.0 346.5,1553.0" fill="#dcdcdc"/><circle cx="348" cy="1564" r="6" fill="#72cfd8"/><path d="M345,1570 h6 v2 a3,3 0 0 1 -6,0 z" fill="#f0f0f0"/><path d="M2589.5,124 L2612,124 L2620,132 L2620,145 L2589.5,145 Z" fill="#dcdcdc"/><path d="M2612,124 L2612,132 L2620,132" fill="#ededed" stroke="#3a4352" stroke-width="1.2"/><rect x="2587" y="116" width="15" height="16" fill="#3a4352"/><path d="M2590,131 v-10 a5,5 0 0 1 10,0 v9 a3,3 0 0 1 -6,0 v-8" fill="none" stroke="#dcdcdc" stroke-width="1.8"/>
<rect x="2696" y="120" width="27" height="26" fill="#cfcfd2"/><rect x="2696" y="120" width="27" height="5" fill="#b9babd"/><rect x="2698" y="121.5" width="3" height="2" fill="#333"/><g fill="#2a2f38"><rect x="2699" y="128" width="5" height="4"/><rect x="2699" y="134" width="5" height="4"/></g><g fill="#6d727c"><rect x="2706" y="128" width="5" height="4"/><rect x="2713" y="128" width="5" height="4"/><rect x="2706" y="134" width="5" height="4"/><rect x="2713" y="134" width="5" height="4"/></g><rect x="2699" y="141" width="20" height="2" fill="#6d727c"/>
<polyline points="2994,128.5 2999,133 2994,137.6" fill="none" stroke="#a5a9af" stroke-width="1.5"/><polyline points="3001,128.5 3006,133 3001,137.6" fill="none" stroke="#a5a9af" stroke-width="1.5"/>
<rect x="2980.5" y="159.5" width="17" height="23.5" fill="none" stroke="#dcdcdc" stroke-width="1.8"/><line x1="2991" y1="159.5" x2="2991" y2="183" stroke="#dcdcdc" stroke-width="1.8"/><line x1="2975" y1="171" x2="2988" y2="171" stroke="#7ec0f5" stroke-width="1.8"/><polygon points="2972,171 2977,167.5 2977,174.5" fill="#7ec0f5"/>
<rect x="2585.4" y="205.5" width="51.29999999999973" height="43.5" fill="#4b5366"/>
<rect x="2638.7" y="205.5" width="48.30000000000018" height="43.5" fill="#4b5366"/>
<rect x="2688.8" y="205.5" width="48.19999999999982" height="43.5" fill="#4b5366"/>
<rect x="2738.6" y="205.5" width="48.20000000000027" height="43.5" fill="#4b5366"/>
<rect x="2788.9" y="205.5" width="47.79999999999973" height="43.5" fill="#4b5366"/>
<rect x="2839" y="205.5" width="48" height="43.5" fill="#4b5366"/>
<rect x="2889" y="205.5" width="48" height="43.5" fill="#4b5366"/>
<rect x="2937" y="205.5" width="53" height="43.5" fill="#2d323c"/>
<path d="M2595,217 L2611,217 L2617,223 L2617,240 L2595,240 Z" fill="#dcdcdc"/><path d="M2611,217 L2611,223 L2617,223" fill="none" stroke="#4b5366" stroke-width="1.2"/><rect x="2593" y="211" width="12" height="16" fill="#4b5366"/><path d="M2595,225 v-9 a4.5,4.5 0 0 1 9,0 v8 a2.5,2.5 0 0 1 -5,0 v-7" fill="none" stroke="#7ec0f5" stroke-width="1.8"/><path d="M2612,228 v14 M2605,235 h14" stroke="#6ccf7c" stroke-width="3"/>
<path d="M2648,217 L2664,217 L2670,223 L2670,240 L2648,240 Z" fill="#8a90a0"/><path d="M2664,217 L2664,223 L2670,223" fill="none" stroke="#4b5366" stroke-width="1.2"/><rect x="2646" y="211" width="12" height="16" fill="#4b5366"/><path d="M2648,225 v-9 a4.5,4.5 0 0 1 9,0 v8 a2.5,2.5 0 0 1 -5,0 v-7" fill="none" stroke="#5a7fae" stroke-width="1.8"/><g transform="translate(2664,242) scale(0.6)"><g transform="rotate(-45)"><polygon points="0,0 8,-5 8,5" fill="#d0d0d0"/><rect x="8" y="-5" width="20" height="10" fill="#c9b58a"/><path d="M28,-5 h3 a5,5 0 0 1 0,10 h-3 z" fill="#c96a65"/></g></g>
<path d="M2697,219 L2723,219 L2729,225 L2729,241 L2697,241 Z" fill="#8a90a0"/><path d="M2723,219 L2723,225 L2729,225" fill="none" stroke="#4b5366" stroke-width="1.2"/><rect x="2695" y="211" width="12" height="16" fill="#4b5366"/><path d="M2697,225 v-9 a4.5,4.5 0 0 1 9,0 v8 a2.5,2.5 0 0 1 -5,0 v-7" fill="none" stroke="#5a7fae" stroke-width="1.8"/>
<path d="M2749,217 L2765,217 L2771,223 L2771,240 L2749,240 Z" fill="#8a90a0"/><path d="M2765,217 L2765,223 L2771,223" fill="none" stroke="#4b5366" stroke-width="1.2"/><rect x="2747" y="211" width="12" height="16" fill="#4b5366"/><path d="M2749,225 v-9 a4.5,4.5 0 0 1 9,0 v8 a2.5,2.5 0 0 1 -5,0 v-7" fill="none" stroke="#5a7fae" stroke-width="1.8"/><path d="M2764,230 L2775,241 M2775,230 L2764,241" stroke="#b4524f" stroke-width="3"/>
<path d="M2799,224 A14,14 0 0 1 2825,221" fill="none" stroke="#6ccf7c" stroke-width="4"/><polygon points="2829,214 2829,226 2818,224" fill="#6ccf7c"/><path d="M2827,230 A14,14 0 0 1 2801,233" fill="none" stroke="#6ccf7c" stroke-width="4"/><polygon points="2797,240 2797,228 2808,230" fill="#6ccf7c"/>
<rect x="2847" y="211" width="15" height="15" fill="#8a90a0"/><rect x="2861" y="227" width="16" height="15" fill="#8a90a0"/><path d="M2855,226 v9 h6" fill="none" stroke="#8a90a0" stroke-width="1.5"/><g transform="translate(2864,226) scale(0.55)"><g transform="rotate(-45)"><polygon points="0,0 8,-5 8,5" fill="#d0d0d0"/><rect x="8" y="-5" width="20" height="10" fill="#c9b58a"/><path d="M28,-5 h3 a5,5 0 0 1 0,10 h-3 z" fill="#c96a65"/></g></g>
<path d="M2897,216 L2907,216 L2910,219 L2929,219 L2929,241 L2897,241 Z" fill="#dcdcdc"/><g stroke="#4a8fe0" stroke-width="1.6"><line x1="2900" y1="227" x2="2924" y2="227"/><line x1="2902" y1="234" x2="2926" y2="234"/></g><polygon points="2926,227 2921,224 2921,230" fill="#4a8fe0"/><polygon points="2900,234 2905,231 2905,237" fill="#4a8fe0"/>
<circle cx="2964.7" cy="227.2" r="16" fill="#d9d9d9"/><circle cx="2964.7" cy="218.5" r="2.2" fill="#555"/><path d="M2960.5,223 h5.5 v12 h3 v2.5 h-9 v-2.5 h3 v-9.5 h-2.5 z" fill="#555"/>
<rect x="2636" y="277" width="28" height="31.5" fill="#dcdcdc"/><g stroke="#6a6a6a" stroke-width="1.3"><line x1="2643" y1="277" x2="2643" y2="308.5"/><line x1="2636" y1="288" x2="2664" y2="288"/></g><rect x="2640.5" y="285.5" width="5" height="5" fill="#dcdcdc" stroke="#6a6a6a" stroke-width="1"/>
</svg>
<div class="t" style="left:104.0px;top:75.2px;font-size:23px;color:#a6aab1;letter-spacing:0.4px;">Start</div>
<div class="t" style="left:362.0px;top:76.2px;font-size:22px;color:#f5f5f5;font-weight:bold;">s&oacute;lidos 1*</div>
<div class="t" style="left:37.0px;top:121.7px;font-size:24px;color:#f2f2f2;">Drafting</div>
<div class="t" style="left:192.0px;top:121.7px;font-size:24px;color:#a9acb1;">Modeling</div>
<div class="t" style="left:34.5px;top:167.1px;font-size:20px;color:#f0f0f0;letter-spacing:-0.15px;">Draw</div>
<div class="t" style="left:34.5px;top:359.1px;font-size:20px;color:#f0f0f0;letter-spacing:-0.15px;">Hatch</div>
<div class="t" style="left:34.5px;top:503.1px;font-size:20px;color:#f0f0f0;letter-spacing:-0.15px;">Block</div>
<div class="t" style="left:34.5px;top:695.1px;font-size:20px;color:#f0f0f0;letter-spacing:-0.15px;">Modify</div>
<div class="t" style="left:34.5px;top:886.7px;font-size:20px;color:#f0f0f0;letter-spacing:-0.15px;">Text</div>
<div class="t" style="left:34.5px;top:1030.9px;font-size:20px;color:#f0f0f0;letter-spacing:-0.15px;">Dimension</div>
<div class="t" style="left:34.5px;top:1174.8px;font-size:20px;color:#f0f0f0;letter-spacing:-0.15px;">Leader</div>
<div class="t" style="left:34.5px;top:1318.9px;font-size:20px;color:#f0f0f0;letter-spacing:-0.15px;">Table</div>
<div class="t" style="left:34.5px;top:1462.1px;font-size:20px;color:#f0f0f0;letter-spacing:-0.15px;">Parametric</div>
<div class="t" style="left:451.0px;top:121.5px;font-size:23px;color:#a2a2a2;font-weight:bold;letter-spacing:0.5px;">Custom View</div>
<div class="t" style="left:627.6px;top:121.5px;font-size:23px;color:#a2a2a2;font-weight:bold;letter-spacing:0.5px;">X&#8211;Ray</div>
<div class="t" style="left:2573.0px;top:160.2px;font-size:25px;color:#f0f0f0;letter-spacing:0.1px;">Reference Manager</div>
<div class="t" style="left:2670.5px;top:279.3px;font-size:22.5px;color:#f2f2f2;">s&oacute;lidos 1</div>
<div class="t" style="left:1050.0px;top:1485.5px;font-size:21px;color:#cfd1d5;letter-spacing:-0.04px;-webkit-text-stroke:0;">Specify point on the XY plane or &lt;accept&gt;:</div>
<div class="t" style="left:1050.0px;top:1515.2px;font-size:21px;color:#cfd1d5;letter-spacing:-1.2px;-webkit-text-stroke:0;">Command: CIRCLE</div>
<div class="t" style="left:1050.0px;top:1545.2px;font-size:21px;color:#cfd1d5;letter-spacing:0.24px;-webkit-text-stroke:0;">Specify center point for circle or [3P/2P/Ttr (tan tan radius)]:</div>
<div class="t" style="left:1050.0px;top:1574.9px;font-size:21px;color:#cfd1d5;letter-spacing:0.11px;-webkit-text-stroke:0;">Specify radius of circle or [Diameter] &lt;1.000&gt;:</div>
</body></html>
